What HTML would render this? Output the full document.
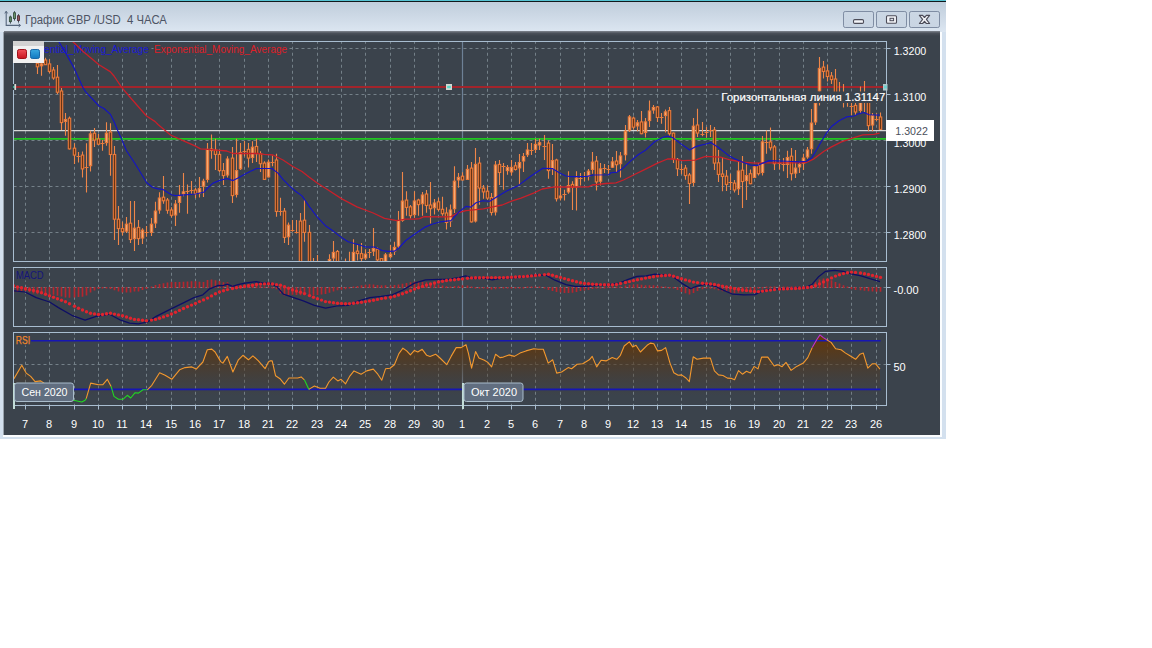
<!DOCTYPE html>
<html><head><meta charset="utf-8"><title>chart</title>
<style>
html,body{margin:0;padding:0;background:#fff;}
body{width:1152px;height:648px;overflow:hidden;position:relative;font-family:"Liberation Sans",sans-serif;}
#win{position:absolute;left:0;top:0;width:946px;height:438.6px;background:#d3e0ee;}
#topc{position:absolute;left:0;top:0;width:946px;height:1px;background:#55c3d3;}
#topk{position:absolute;left:0;top:1px;width:946px;height:1px;background:#10181c;}
#tbar{position:absolute;left:0;top:2px;width:946px;height:30px;background:linear-gradient(#c0cedc 0%,#cbd7e4 40%,#dce6f1 100%);}
#title{position:absolute;left:25.2px;top:13px;font-size:12px;color:#4d5464;white-space:pre;line-height:14px;transform-origin:0 0;transform:scaleX(0.944);}
#pan{position:absolute;left:4px;top:32px;width:936px;height:403px;background:#3b434c;}
#panshadow{position:absolute;left:4px;top:31px;width:936px;height:5px;background:linear-gradient(#80868f 0%,#4a5059 45%,#3b434c 100%);}
#wl{position:absolute;left:3px;top:32px;width:1px;height:404px;background:#9aa3ad;}
#wr{position:absolute;left:940px;top:32px;width:2px;height:405px;background:#fbfdff;}
#wb{position:absolute;left:3px;top:435px;width:939px;height:2px;background:#fbfdff;}
.btn{position:absolute;top:11px;height:14.7px;width:28.5px;border:1px solid #7f8da3;border-radius:2.2px;background:linear-gradient(#cbd7e4,#c9d5e3);box-sizing:content-box;}
svg{position:absolute;left:0;top:0;}
.ax{font-size:11px;fill:#fff;font-family:"Liberation Sans",sans-serif;}
.lg{font-size:11px;font-family:"Liberation Sans",sans-serif;}
.lb{font-size:11px;font-weight:normal;fill:#fff;stroke:#fff;stroke-width:0.2px;font-family:"Liberation Sans",sans-serif;}
.tg{font-size:11.5px;fill:#fff;font-family:"Liberation Sans",sans-serif;}
</style></head><body>
<div id="win"></div><div id="topc"></div><div id="topk"></div><div id="tbar"></div>
<div id="title">График GBP /USD  4 ЧАСА</div>
<div class="btn" style="left:843.2px"></div><div class="btn" style="left:876.2px"></div><div class="btn" style="left:909.2px"></div>
<div id="pan"></div><div id="panshadow"></div><div id="wl"></div><div id="wr"></div><div id="wb"></div>
<svg width="1152" height="648" viewBox="0 0 1152 648">
<line x1="25.5" x2="25.5" y1="41.75" y2="261.0" stroke="#748088" stroke-width="1" stroke-dasharray="3 3" stroke-dashoffset="1"/>
<line x1="25.5" x2="25.5" y1="267.75" y2="326.0" stroke="#748088" stroke-width="1" stroke-dasharray="3 3" stroke-dashoffset="1"/>
<line x1="25.5" x2="25.5" y1="332.75" y2="405.0" stroke="#748088" stroke-width="1" stroke-dasharray="3 3" stroke-dashoffset="1"/>
<line x1="49.5" x2="49.5" y1="41.75" y2="261.0" stroke="#748088" stroke-width="1" stroke-dasharray="3 3" stroke-dashoffset="1"/>
<line x1="49.5" x2="49.5" y1="267.75" y2="326.0" stroke="#748088" stroke-width="1" stroke-dasharray="3 3" stroke-dashoffset="1"/>
<line x1="49.5" x2="49.5" y1="332.75" y2="405.0" stroke="#748088" stroke-width="1" stroke-dasharray="3 3" stroke-dashoffset="1"/>
<line x1="74.5" x2="74.5" y1="41.75" y2="261.0" stroke="#748088" stroke-width="1" stroke-dasharray="3 3" stroke-dashoffset="1"/>
<line x1="74.5" x2="74.5" y1="267.75" y2="326.0" stroke="#748088" stroke-width="1" stroke-dasharray="3 3" stroke-dashoffset="1"/>
<line x1="74.5" x2="74.5" y1="332.75" y2="405.0" stroke="#748088" stroke-width="1" stroke-dasharray="3 3" stroke-dashoffset="1"/>
<line x1="98.5" x2="98.5" y1="41.75" y2="261.0" stroke="#748088" stroke-width="1" stroke-dasharray="3 3" stroke-dashoffset="1"/>
<line x1="98.5" x2="98.5" y1="267.75" y2="326.0" stroke="#748088" stroke-width="1" stroke-dasharray="3 3" stroke-dashoffset="1"/>
<line x1="98.5" x2="98.5" y1="332.75" y2="405.0" stroke="#748088" stroke-width="1" stroke-dasharray="3 3" stroke-dashoffset="1"/>
<line x1="122.5" x2="122.5" y1="41.75" y2="261.0" stroke="#748088" stroke-width="1" stroke-dasharray="3 3" stroke-dashoffset="1"/>
<line x1="122.5" x2="122.5" y1="267.75" y2="326.0" stroke="#748088" stroke-width="1" stroke-dasharray="3 3" stroke-dashoffset="1"/>
<line x1="122.5" x2="122.5" y1="332.75" y2="405.0" stroke="#748088" stroke-width="1" stroke-dasharray="3 3" stroke-dashoffset="1"/>
<line x1="146.5" x2="146.5" y1="41.75" y2="261.0" stroke="#748088" stroke-width="1" stroke-dasharray="3 3" stroke-dashoffset="1"/>
<line x1="146.5" x2="146.5" y1="267.75" y2="326.0" stroke="#748088" stroke-width="1" stroke-dasharray="3 3" stroke-dashoffset="1"/>
<line x1="146.5" x2="146.5" y1="332.75" y2="405.0" stroke="#748088" stroke-width="1" stroke-dasharray="3 3" stroke-dashoffset="1"/>
<line x1="171.5" x2="171.5" y1="41.75" y2="261.0" stroke="#748088" stroke-width="1" stroke-dasharray="3 3" stroke-dashoffset="1"/>
<line x1="171.5" x2="171.5" y1="267.75" y2="326.0" stroke="#748088" stroke-width="1" stroke-dasharray="3 3" stroke-dashoffset="1"/>
<line x1="171.5" x2="171.5" y1="332.75" y2="405.0" stroke="#748088" stroke-width="1" stroke-dasharray="3 3" stroke-dashoffset="1"/>
<line x1="195.5" x2="195.5" y1="41.75" y2="261.0" stroke="#748088" stroke-width="1" stroke-dasharray="3 3" stroke-dashoffset="1"/>
<line x1="195.5" x2="195.5" y1="267.75" y2="326.0" stroke="#748088" stroke-width="1" stroke-dasharray="3 3" stroke-dashoffset="1"/>
<line x1="195.5" x2="195.5" y1="332.75" y2="405.0" stroke="#748088" stroke-width="1" stroke-dasharray="3 3" stroke-dashoffset="1"/>
<line x1="219.5" x2="219.5" y1="41.75" y2="261.0" stroke="#748088" stroke-width="1" stroke-dasharray="3 3" stroke-dashoffset="1"/>
<line x1="219.5" x2="219.5" y1="267.75" y2="326.0" stroke="#748088" stroke-width="1" stroke-dasharray="3 3" stroke-dashoffset="1"/>
<line x1="219.5" x2="219.5" y1="332.75" y2="405.0" stroke="#748088" stroke-width="1" stroke-dasharray="3 3" stroke-dashoffset="1"/>
<line x1="244.5" x2="244.5" y1="41.75" y2="261.0" stroke="#748088" stroke-width="1" stroke-dasharray="3 3" stroke-dashoffset="1"/>
<line x1="244.5" x2="244.5" y1="267.75" y2="326.0" stroke="#748088" stroke-width="1" stroke-dasharray="3 3" stroke-dashoffset="1"/>
<line x1="244.5" x2="244.5" y1="332.75" y2="405.0" stroke="#748088" stroke-width="1" stroke-dasharray="3 3" stroke-dashoffset="1"/>
<line x1="268.5" x2="268.5" y1="41.75" y2="261.0" stroke="#748088" stroke-width="1" stroke-dasharray="3 3" stroke-dashoffset="1"/>
<line x1="268.5" x2="268.5" y1="267.75" y2="326.0" stroke="#748088" stroke-width="1" stroke-dasharray="3 3" stroke-dashoffset="1"/>
<line x1="268.5" x2="268.5" y1="332.75" y2="405.0" stroke="#748088" stroke-width="1" stroke-dasharray="3 3" stroke-dashoffset="1"/>
<line x1="292.5" x2="292.5" y1="41.75" y2="261.0" stroke="#748088" stroke-width="1" stroke-dasharray="3 3" stroke-dashoffset="1"/>
<line x1="292.5" x2="292.5" y1="267.75" y2="326.0" stroke="#748088" stroke-width="1" stroke-dasharray="3 3" stroke-dashoffset="1"/>
<line x1="292.5" x2="292.5" y1="332.75" y2="405.0" stroke="#748088" stroke-width="1" stroke-dasharray="3 3" stroke-dashoffset="1"/>
<line x1="317.5" x2="317.5" y1="41.75" y2="261.0" stroke="#748088" stroke-width="1" stroke-dasharray="3 3" stroke-dashoffset="1"/>
<line x1="317.5" x2="317.5" y1="267.75" y2="326.0" stroke="#748088" stroke-width="1" stroke-dasharray="3 3" stroke-dashoffset="1"/>
<line x1="317.5" x2="317.5" y1="332.75" y2="405.0" stroke="#748088" stroke-width="1" stroke-dasharray="3 3" stroke-dashoffset="1"/>
<line x1="341.5" x2="341.5" y1="41.75" y2="261.0" stroke="#748088" stroke-width="1" stroke-dasharray="3 3" stroke-dashoffset="1"/>
<line x1="341.5" x2="341.5" y1="267.75" y2="326.0" stroke="#748088" stroke-width="1" stroke-dasharray="3 3" stroke-dashoffset="1"/>
<line x1="341.5" x2="341.5" y1="332.75" y2="405.0" stroke="#748088" stroke-width="1" stroke-dasharray="3 3" stroke-dashoffset="1"/>
<line x1="365.5" x2="365.5" y1="41.75" y2="261.0" stroke="#748088" stroke-width="1" stroke-dasharray="3 3" stroke-dashoffset="1"/>
<line x1="365.5" x2="365.5" y1="267.75" y2="326.0" stroke="#748088" stroke-width="1" stroke-dasharray="3 3" stroke-dashoffset="1"/>
<line x1="365.5" x2="365.5" y1="332.75" y2="405.0" stroke="#748088" stroke-width="1" stroke-dasharray="3 3" stroke-dashoffset="1"/>
<line x1="390.5" x2="390.5" y1="41.75" y2="261.0" stroke="#748088" stroke-width="1" stroke-dasharray="3 3" stroke-dashoffset="1"/>
<line x1="390.5" x2="390.5" y1="267.75" y2="326.0" stroke="#748088" stroke-width="1" stroke-dasharray="3 3" stroke-dashoffset="1"/>
<line x1="390.5" x2="390.5" y1="332.75" y2="405.0" stroke="#748088" stroke-width="1" stroke-dasharray="3 3" stroke-dashoffset="1"/>
<line x1="414.5" x2="414.5" y1="41.75" y2="261.0" stroke="#748088" stroke-width="1" stroke-dasharray="3 3" stroke-dashoffset="1"/>
<line x1="414.5" x2="414.5" y1="267.75" y2="326.0" stroke="#748088" stroke-width="1" stroke-dasharray="3 3" stroke-dashoffset="1"/>
<line x1="414.5" x2="414.5" y1="332.75" y2="405.0" stroke="#748088" stroke-width="1" stroke-dasharray="3 3" stroke-dashoffset="1"/>
<line x1="438.5" x2="438.5" y1="41.75" y2="261.0" stroke="#748088" stroke-width="1" stroke-dasharray="3 3" stroke-dashoffset="1"/>
<line x1="438.5" x2="438.5" y1="267.75" y2="326.0" stroke="#748088" stroke-width="1" stroke-dasharray="3 3" stroke-dashoffset="1"/>
<line x1="438.5" x2="438.5" y1="332.75" y2="405.0" stroke="#748088" stroke-width="1" stroke-dasharray="3 3" stroke-dashoffset="1"/>
<line x1="462.5" x2="462.5" y1="41.75" y2="261.0" stroke="#748088" stroke-width="1" stroke-dasharray="3 3" stroke-dashoffset="1"/>
<line x1="462.5" x2="462.5" y1="267.75" y2="326.0" stroke="#748088" stroke-width="1" stroke-dasharray="3 3" stroke-dashoffset="1"/>
<line x1="462.5" x2="462.5" y1="332.75" y2="405.0" stroke="#748088" stroke-width="1" stroke-dasharray="3 3" stroke-dashoffset="1"/>
<line x1="487.5" x2="487.5" y1="41.75" y2="261.0" stroke="#748088" stroke-width="1" stroke-dasharray="3 3" stroke-dashoffset="1"/>
<line x1="487.5" x2="487.5" y1="267.75" y2="326.0" stroke="#748088" stroke-width="1" stroke-dasharray="3 3" stroke-dashoffset="1"/>
<line x1="487.5" x2="487.5" y1="332.75" y2="405.0" stroke="#748088" stroke-width="1" stroke-dasharray="3 3" stroke-dashoffset="1"/>
<line x1="511.5" x2="511.5" y1="41.75" y2="261.0" stroke="#748088" stroke-width="1" stroke-dasharray="3 3" stroke-dashoffset="1"/>
<line x1="511.5" x2="511.5" y1="267.75" y2="326.0" stroke="#748088" stroke-width="1" stroke-dasharray="3 3" stroke-dashoffset="1"/>
<line x1="511.5" x2="511.5" y1="332.75" y2="405.0" stroke="#748088" stroke-width="1" stroke-dasharray="3 3" stroke-dashoffset="1"/>
<line x1="535.5" x2="535.5" y1="41.75" y2="261.0" stroke="#748088" stroke-width="1" stroke-dasharray="3 3" stroke-dashoffset="1"/>
<line x1="535.5" x2="535.5" y1="267.75" y2="326.0" stroke="#748088" stroke-width="1" stroke-dasharray="3 3" stroke-dashoffset="1"/>
<line x1="535.5" x2="535.5" y1="332.75" y2="405.0" stroke="#748088" stroke-width="1" stroke-dasharray="3 3" stroke-dashoffset="1"/>
<line x1="560.5" x2="560.5" y1="41.75" y2="261.0" stroke="#748088" stroke-width="1" stroke-dasharray="3 3" stroke-dashoffset="1"/>
<line x1="560.5" x2="560.5" y1="267.75" y2="326.0" stroke="#748088" stroke-width="1" stroke-dasharray="3 3" stroke-dashoffset="1"/>
<line x1="560.5" x2="560.5" y1="332.75" y2="405.0" stroke="#748088" stroke-width="1" stroke-dasharray="3 3" stroke-dashoffset="1"/>
<line x1="584.5" x2="584.5" y1="41.75" y2="261.0" stroke="#748088" stroke-width="1" stroke-dasharray="3 3" stroke-dashoffset="1"/>
<line x1="584.5" x2="584.5" y1="267.75" y2="326.0" stroke="#748088" stroke-width="1" stroke-dasharray="3 3" stroke-dashoffset="1"/>
<line x1="584.5" x2="584.5" y1="332.75" y2="405.0" stroke="#748088" stroke-width="1" stroke-dasharray="3 3" stroke-dashoffset="1"/>
<line x1="608.5" x2="608.5" y1="41.75" y2="261.0" stroke="#748088" stroke-width="1" stroke-dasharray="3 3" stroke-dashoffset="1"/>
<line x1="608.5" x2="608.5" y1="267.75" y2="326.0" stroke="#748088" stroke-width="1" stroke-dasharray="3 3" stroke-dashoffset="1"/>
<line x1="608.5" x2="608.5" y1="332.75" y2="405.0" stroke="#748088" stroke-width="1" stroke-dasharray="3 3" stroke-dashoffset="1"/>
<line x1="633.5" x2="633.5" y1="41.75" y2="261.0" stroke="#748088" stroke-width="1" stroke-dasharray="3 3" stroke-dashoffset="1"/>
<line x1="633.5" x2="633.5" y1="267.75" y2="326.0" stroke="#748088" stroke-width="1" stroke-dasharray="3 3" stroke-dashoffset="1"/>
<line x1="633.5" x2="633.5" y1="332.75" y2="405.0" stroke="#748088" stroke-width="1" stroke-dasharray="3 3" stroke-dashoffset="1"/>
<line x1="657.5" x2="657.5" y1="41.75" y2="261.0" stroke="#748088" stroke-width="1" stroke-dasharray="3 3" stroke-dashoffset="1"/>
<line x1="657.5" x2="657.5" y1="267.75" y2="326.0" stroke="#748088" stroke-width="1" stroke-dasharray="3 3" stroke-dashoffset="1"/>
<line x1="657.5" x2="657.5" y1="332.75" y2="405.0" stroke="#748088" stroke-width="1" stroke-dasharray="3 3" stroke-dashoffset="1"/>
<line x1="681.5" x2="681.5" y1="41.75" y2="261.0" stroke="#748088" stroke-width="1" stroke-dasharray="3 3" stroke-dashoffset="1"/>
<line x1="681.5" x2="681.5" y1="267.75" y2="326.0" stroke="#748088" stroke-width="1" stroke-dasharray="3 3" stroke-dashoffset="1"/>
<line x1="681.5" x2="681.5" y1="332.75" y2="405.0" stroke="#748088" stroke-width="1" stroke-dasharray="3 3" stroke-dashoffset="1"/>
<line x1="706.5" x2="706.5" y1="41.75" y2="261.0" stroke="#748088" stroke-width="1" stroke-dasharray="3 3" stroke-dashoffset="1"/>
<line x1="706.5" x2="706.5" y1="267.75" y2="326.0" stroke="#748088" stroke-width="1" stroke-dasharray="3 3" stroke-dashoffset="1"/>
<line x1="706.5" x2="706.5" y1="332.75" y2="405.0" stroke="#748088" stroke-width="1" stroke-dasharray="3 3" stroke-dashoffset="1"/>
<line x1="730.5" x2="730.5" y1="41.75" y2="261.0" stroke="#748088" stroke-width="1" stroke-dasharray="3 3" stroke-dashoffset="1"/>
<line x1="730.5" x2="730.5" y1="267.75" y2="326.0" stroke="#748088" stroke-width="1" stroke-dasharray="3 3" stroke-dashoffset="1"/>
<line x1="730.5" x2="730.5" y1="332.75" y2="405.0" stroke="#748088" stroke-width="1" stroke-dasharray="3 3" stroke-dashoffset="1"/>
<line x1="754.5" x2="754.5" y1="41.75" y2="261.0" stroke="#748088" stroke-width="1" stroke-dasharray="3 3" stroke-dashoffset="1"/>
<line x1="754.5" x2="754.5" y1="267.75" y2="326.0" stroke="#748088" stroke-width="1" stroke-dasharray="3 3" stroke-dashoffset="1"/>
<line x1="754.5" x2="754.5" y1="332.75" y2="405.0" stroke="#748088" stroke-width="1" stroke-dasharray="3 3" stroke-dashoffset="1"/>
<line x1="779.5" x2="779.5" y1="41.75" y2="261.0" stroke="#748088" stroke-width="1" stroke-dasharray="3 3" stroke-dashoffset="1"/>
<line x1="779.5" x2="779.5" y1="267.75" y2="326.0" stroke="#748088" stroke-width="1" stroke-dasharray="3 3" stroke-dashoffset="1"/>
<line x1="779.5" x2="779.5" y1="332.75" y2="405.0" stroke="#748088" stroke-width="1" stroke-dasharray="3 3" stroke-dashoffset="1"/>
<line x1="803.5" x2="803.5" y1="41.75" y2="261.0" stroke="#748088" stroke-width="1" stroke-dasharray="3 3" stroke-dashoffset="1"/>
<line x1="803.5" x2="803.5" y1="267.75" y2="326.0" stroke="#748088" stroke-width="1" stroke-dasharray="3 3" stroke-dashoffset="1"/>
<line x1="803.5" x2="803.5" y1="332.75" y2="405.0" stroke="#748088" stroke-width="1" stroke-dasharray="3 3" stroke-dashoffset="1"/>
<line x1="827.5" x2="827.5" y1="41.75" y2="261.0" stroke="#748088" stroke-width="1" stroke-dasharray="3 3" stroke-dashoffset="1"/>
<line x1="827.5" x2="827.5" y1="267.75" y2="326.0" stroke="#748088" stroke-width="1" stroke-dasharray="3 3" stroke-dashoffset="1"/>
<line x1="827.5" x2="827.5" y1="332.75" y2="405.0" stroke="#748088" stroke-width="1" stroke-dasharray="3 3" stroke-dashoffset="1"/>
<line x1="851.5" x2="851.5" y1="41.75" y2="261.0" stroke="#748088" stroke-width="1" stroke-dasharray="3 3" stroke-dashoffset="1"/>
<line x1="851.5" x2="851.5" y1="267.75" y2="326.0" stroke="#748088" stroke-width="1" stroke-dasharray="3 3" stroke-dashoffset="1"/>
<line x1="851.5" x2="851.5" y1="332.75" y2="405.0" stroke="#748088" stroke-width="1" stroke-dasharray="3 3" stroke-dashoffset="1"/>
<line x1="876.5" x2="876.5" y1="41.75" y2="261.0" stroke="#748088" stroke-width="1" stroke-dasharray="3 3" stroke-dashoffset="1"/>
<line x1="876.5" x2="876.5" y1="267.75" y2="326.0" stroke="#748088" stroke-width="1" stroke-dasharray="3 3" stroke-dashoffset="1"/>
<line x1="876.5" x2="876.5" y1="332.75" y2="405.0" stroke="#748088" stroke-width="1" stroke-dasharray="3 3" stroke-dashoffset="1"/>
<line x1="13.5" x2="886.5" y1="48.5" y2="48.5" stroke="#748088" stroke-width="1" stroke-dasharray="3 3"/>
<line x1="886.5" x2="890.5" y1="48.5" y2="48.5" stroke="#a8bdd0" stroke-width="1"/>
<line x1="13.5" x2="886.5" y1="94.5" y2="94.5" stroke="#748088" stroke-width="1" stroke-dasharray="3 3"/>
<line x1="886.5" x2="890.5" y1="94.5" y2="94.5" stroke="#a8bdd0" stroke-width="1"/>
<line x1="13.5" x2="886.5" y1="140.5" y2="140.5" stroke="#748088" stroke-width="1" stroke-dasharray="3 3"/>
<line x1="886.5" x2="890.5" y1="140.5" y2="140.5" stroke="#a8bdd0" stroke-width="1"/>
<line x1="13.5" x2="886.5" y1="186.5" y2="186.5" stroke="#748088" stroke-width="1" stroke-dasharray="3 3"/>
<line x1="886.5" x2="890.5" y1="186.5" y2="186.5" stroke="#a8bdd0" stroke-width="1"/>
<line x1="13.5" x2="886.5" y1="232.5" y2="232.5" stroke="#748088" stroke-width="1" stroke-dasharray="3 3"/>
<line x1="886.5" x2="890.5" y1="232.5" y2="232.5" stroke="#a8bdd0" stroke-width="1"/>
<line x1="13.5" x2="886.5" y1="287.5" y2="287.5" stroke="#748088" stroke-width="1" stroke-dasharray="3 3"/>
<line x1="886.5" x2="890.5" y1="287.5" y2="287.5" stroke="#a8bdd0" stroke-width="1"/>
<line x1="13.5" x2="886.5" y1="364.5" y2="364.5" stroke="#748088" stroke-width="1" stroke-dasharray="3 3"/>
<line x1="886.5" x2="890.5" y1="364.5" y2="364.5" stroke="#a8bdd0" stroke-width="1"/>
<line x1="462.5" x2="462.5" y1="42.0" y2="261.0" stroke="#6e8196" stroke-width="1.2"/>
<line x1="462.5" x2="462.5" y1="268.0" y2="326.0" stroke="#6e8196" stroke-width="1.2"/>
<line x1="462.5" x2="462.5" y1="333.0" y2="405.0" stroke="#6e8196" stroke-width="1.2"/>
<rect x="15" y="42" width="134.5" height="13.5" fill="#3b434c"/>
<rect x="153.5" y="42" width="134.5" height="13.5" fill="#3b434c"/>
<text x="15.6" y="53.3" class="lg" fill="#1a1ad6" textLength="133.2" lengthAdjust="spacingAndGlyphs">Exponential_Moving_Average</text>
<text x="154" y="53.3" class="lg" fill="#de2028" textLength="133.2" lengthAdjust="spacingAndGlyphs">Exponential_Moving_Average</text>
<defs><clipPath id="cm"><rect x="14.0" y="42.0" width="872.0" height="219.0"/></clipPath><clipPath id="cc"><rect x="14.0" y="268.0" width="872.0" height="58.0"/></clipPath><clipPath id="cr"><rect x="14.0" y="333.0" width="872.0" height="72.0"/></clipPath><linearGradient id="rg" gradientUnits="userSpaceOnUse" x1="0" y1="336" x2="0" y2="396"><stop offset="0" stop-color="#6a3600" stop-opacity="0.92"/><stop offset="0.45" stop-color="#55381a" stop-opacity="0.62"/><stop offset="1" stop-color="#4a3a2c" stop-opacity="0"/></linearGradient></defs>
<g clip-path="url(#cm)">
<line x1="13.5" x2="886.5" y1="87.05" y2="87.05" stroke="#a2242b" stroke-width="2.1"/>
<line x1="13.5" x2="886.5" y1="130.5" y2="130.5" stroke="#d6d6d6" stroke-width="1.25"/>
<line x1="13.5" x2="886.5" y1="138.8" y2="138.8" stroke="#20c620" stroke-width="1.7"/>
<path d="M37.5 62.9V73.9M41.5 63.0V75.8M45.5 57.8V65.0M49.5 59.2V73.3M53.5 66.9V79.7M57.5 65.0V94.1M61.5 87.9V130.1M65.5 112.9V135.7M69.5 116.4V149.5M74.5 143.2V163.9M78.5 152.0V162.6M82.5 151.4V177.6M86.5 143.2V192.4M90.5 130.7V171.4M94.5 128.0V147.0M98.5 133.9V145.1M102.5 140.1V150.7M106.5 122.2V145.7M110.5 123.2V175.7M114.5 146.0V239.9M118.5 206.1V244.9M122.5 221.7V235.5M126.5 217.0V233.0M130.5 201.1V243.0M134.5 201.1V251.1M138.5 219.9V244.9M142.5 228.2V244.0M146.5 226.1V236.7M151.5 218.0V236.1M155.5 201.7V228.0M159.5 192.2V213.7M163.5 176.0V203.7M167.5 198.0V213.7M171.5 207.2V217.4M175.5 200.0V226.1M179.5 185.1V212.8M183.5 173.1V196.2M187.5 184.4V213.7M191.5 181.0V193.7M195.5 188.1V198.1M199.5 176.9V197.5M203.5 178.7V196.9M207.5 143.1V182.5M211.5 134.5V158.7M215.5 138.7V170.0M219.5 150.0V172.5M223.5 163.1V185.0M227.5 156.2V177.5M232.5 146.9V203.1M236.5 138.7V197.5M240.5 143.1V170.0M244.5 141.0V156.2M248.5 143.1V167.5M252.5 141.2V163.1M256.5 138.7V161.9M260.5 151.2V171.9M264.5 161.2V180.0M268.5 159.4V177.5M272.5 155.6V166.2M276.5 153.7V216.7M280.5 197.7V215.7M284.5 208.0V243.0M288.5 222.4V244.9M292.5 219.9V231.7M296.5 219.9V233.6M300.5 213.0V266.0M304.5 199.2V241.7M309.5 224.9V272.0M313.5 258.0V276.0M317.5 254.9V280.0M321.5 264.0V282.0M325.5 263.0V280.0M329.5 254.2V270.0M333.5 241.1V261.5M337.5 249.9V270.0M341.5 262.5V276.0M345.5 258.6V274.0M349.5 251.7V272.0M353.5 239.2V266.0M357.5 244.9V260.5M361.5 243.0V261.0M365.5 249.2V259.9M369.5 249.0V258.0M373.5 228.0V256.1M377.5 247.4V262.0M381.5 258.0V265.0M385.5 253.0V264.0M390.5 244.9V258.0M394.5 241.7V254.9M398.5 211.1V248.0M402.5 171.9V221.7M406.5 191.2V215.8M410.5 205.0V218.5M414.5 191.2V217.7M418.5 198.7V215.8M422.5 192.1V215.8M426.5 190.0V212.7M430.5 181.9V223.6M434.5 199.0V214.6M438.5 197.7V211.2M442.5 196.8V215.7M446.5 207.2V229.4M450.5 204.4V226.9M454.5 166.2V213.1M458.5 173.1V187.8M462.5 172.2V180.6M467.5 165.0V180.0M471.5 161.9V222.5M475.5 148.1V222.5M479.5 156.9V204.7M483.5 185.0V198.7M487.5 185.6V199.7M491.5 193.1V215.6M495.5 160.9V215.6M499.5 160.0V185.0M503.5 163.1V189.7M507.5 165.0V174.7M511.5 160.0V175.6M515.5 162.0V170.6M519.5 154.0V185.0M523.5 153.1V171.9M527.5 143.1V156.9M531.5 143.1V155.0M535.5 138.7V153.1M539.5 138.7V150.0M544.5 135.0V160.0M548.5 140.6V178.7M552.5 144.0V175.0M556.5 158.7V201.6M560.5 185.3V200.6M564.5 189.7V200.6M568.5 171.2V193.7M572.5 181.2V210.0M576.5 171.2V210.6M580.5 173.1V185.6M584.5 171.9V181.2M588.5 169.0V180.6M592.5 151.9V173.7M596.5 156.1V190.6M600.5 163.1V185.6M604.5 164.0V173.1M608.5 165.0V173.7M612.5 156.9V168.1M616.5 151.0V171.9M620.5 151.9V177.5M625.5 125.0V160.6M629.5 115.0V131.9M633.5 116.5V129.7M637.5 120.0V131.2M641.5 110.9V134.2M645.5 118.1V137.5M649.5 100.6V126.9M653.5 105.0V113.7M657.5 106.0V121.9M661.5 113.1V123.7M665.5 109.4V132.5M669.5 106.9V135.6M673.5 132.5V163.1M677.5 158.1V175.9M681.5 163.7V174.2M685.5 165.0V179.7M689.5 173.1V204.0M693.5 118.1V186.2M697.5 108.7V136.9M702.5 121.9V136.2M706.5 126.9V137.5M710.5 125.0V136.9M714.5 126.9V170.0M718.5 150.0V181.9M722.5 156.9V191.2M726.5 170.0V191.0M730.5 173.7V190.0M734.5 180.0V192.5M738.5 161.9V195.0M742.5 156.1V208.1M746.5 164.2V200.0M750.5 169.4V184.2M754.5 165.8V178.1M758.5 163.1V175.6M762.5 136.0V175.6M766.5 130.6V153.7M770.5 127.5V150.6M774.5 145.0V170.0M779.5 158.7V169.4M783.5 158.1V171.2M787.5 150.8V178.1M791.5 148.1V180.6M795.5 150.0V178.1M799.5 161.5V173.1M803.5 153.7V170.0M807.5 146.9V158.7M811.5 109.0V153.7M815.5 98.0V125.0M819.5 57.1V105.6M823.5 60.9V78.4M827.5 64.6V81.5M831.5 72.1V84.0M835.5 69.0V102.0M839.5 82.1V102.0M843.5 84.0V107.6M847.5 92.0V106.7M851.5 94.0V115.0M855.5 98.0V115.1M860.5 86.5V113.2M864.5 80.9V112.0M868.5 96.0V131.2M872.5 113.1V131.2M876.5 113.2V121.0M880.5 112.5V130.0" stroke="#ee8648" stroke-width="1.1" fill="none"/>
<rect x="36.3" y="63.3" width="2.4" height="3.5" fill="#683414" stroke="#ea7a3a" stroke-width="1.1"/>
<rect x="40.3" y="63.9" width="2.4" height="1.9" fill="#f6aa72" stroke="#ea7a3a" stroke-width="1.1"/>
<rect x="44.3" y="60.0" width="2.4" height="4.7" fill="#683414" stroke="#ea7a3a" stroke-width="1.1"/>
<rect x="48.3" y="63.9" width="2.4" height="7.5" fill="#683414" stroke="#ea7a3a" stroke-width="1.1"/>
<rect x="52.3" y="70.0" width="2.4" height="8.0" fill="#683414" stroke="#ea7a3a" stroke-width="1.1"/>
<rect x="56.3" y="77.2" width="2.4" height="15.0" fill="#683414" stroke="#ea7a3a" stroke-width="1.1"/>
<rect x="60.3" y="91.0" width="2.4" height="31.6" fill="#683414" stroke="#ea7a3a" stroke-width="1.1"/>
<rect x="64.3" y="119.5" width="2.4" height="1.9" fill="#f6aa72" stroke="#ea7a3a" stroke-width="1.1"/>
<rect x="68.3" y="118.2" width="2.4" height="30.7" fill="#683414" stroke="#ea7a3a" stroke-width="1.1"/>
<rect x="73.3" y="148.2" width="2.4" height="6.9" fill="#683414" stroke="#ea7a3a" stroke-width="1.1"/>
<path d="M76.5 156.5H80.5" stroke="#ea7a3a" stroke-width="1" fill="none"/>
<rect x="81.3" y="155.1" width="2.4" height="13.8" fill="#683414" stroke="#ea7a3a" stroke-width="1.1"/>
<path d="M84.5 167.5H88.5" stroke="#ea7a3a" stroke-width="1" fill="none"/>
<rect x="89.3" y="133.9" width="2.4" height="31.8" fill="#f6aa72" stroke="#ea7a3a" stroke-width="1.1"/>
<rect x="93.3" y="133.2" width="2.4" height="6.9" fill="#683414" stroke="#ea7a3a" stroke-width="1.1"/>
<rect x="97.3" y="138.9" width="2.4" height="5.3" fill="#683414" stroke="#ea7a3a" stroke-width="1.1"/>
<path d="M100.5 143.5H104.5" stroke="#ea7a3a" stroke-width="1" fill="none"/>
<rect x="105.3" y="133.2" width="2.4" height="9.4" fill="#f6aa72" stroke="#ea7a3a" stroke-width="1.1"/>
<rect x="109.3" y="132.0" width="2.4" height="22.5" fill="#683414" stroke="#ea7a3a" stroke-width="1.1"/>
<rect x="113.3" y="154.5" width="2.4" height="64.7" fill="#683414" stroke="#ea7a3a" stroke-width="1.1"/>
<rect x="117.3" y="219.2" width="2.4" height="9.4" fill="#683414" stroke="#ea7a3a" stroke-width="1.1"/>
<rect x="121.3" y="228.6" width="2.4" height="3.1" fill="#683414" stroke="#ea7a3a" stroke-width="1.1"/>
<rect x="125.3" y="224.2" width="2.4" height="6.9" fill="#f6aa72" stroke="#ea7a3a" stroke-width="1.1"/>
<rect x="129.3" y="223.2" width="2.4" height="16.3" fill="#683414" stroke="#ea7a3a" stroke-width="1.1"/>
<rect x="133.3" y="228.2" width="2.4" height="10.4" fill="#f6aa72" stroke="#ea7a3a" stroke-width="1.1"/>
<rect x="137.3" y="227.4" width="2.4" height="11.2" fill="#683414" stroke="#ea7a3a" stroke-width="1.1"/>
<rect x="141.3" y="230.2" width="2.4" height="7.8" fill="#f6aa72" stroke="#ea7a3a" stroke-width="1.1"/>
<path d="M144.5 232.5H148.5" stroke="#ea7a3a" stroke-width="1" fill="none"/>
<rect x="150.3" y="224.2" width="2.4" height="8.2" fill="#f6aa72" stroke="#ea7a3a" stroke-width="1.1"/>
<rect x="154.3" y="211.1" width="2.4" height="11.9" fill="#f6aa72" stroke="#ea7a3a" stroke-width="1.1"/>
<rect x="158.3" y="198.0" width="2.4" height="12.0" fill="#f6aa72" stroke="#ea7a3a" stroke-width="1.1"/>
<rect x="162.3" y="197.2" width="2.4" height="3.6" fill="#683414" stroke="#ea7a3a" stroke-width="1.1"/>
<rect x="166.3" y="200.0" width="2.4" height="10.3" fill="#683414" stroke="#ea7a3a" stroke-width="1.1"/>
<rect x="170.3" y="210.0" width="2.4" height="5.3" fill="#683414" stroke="#ea7a3a" stroke-width="1.1"/>
<rect x="174.3" y="204.0" width="2.4" height="11.0" fill="#f6aa72" stroke="#ea7a3a" stroke-width="1.1"/>
<rect x="178.3" y="196.2" width="2.4" height="6.2" fill="#f6aa72" stroke="#ea7a3a" stroke-width="1.1"/>
<rect x="182.3" y="191.9" width="2.4" height="1.8" fill="#f6aa72" stroke="#ea7a3a" stroke-width="1.1"/>
<path d="M185.5 191.5H189.5" stroke="#ea7a3a" stroke-width="1" fill="none"/>
<path d="M189.5 190.5H193.5" stroke="#ea7a3a" stroke-width="1" fill="none"/>
<rect x="194.3" y="190.0" width="2.4" height="3.7" fill="#683414" stroke="#ea7a3a" stroke-width="1.1"/>
<rect x="198.3" y="188.7" width="2.4" height="4.4" fill="#f6aa72" stroke="#ea7a3a" stroke-width="1.1"/>
<rect x="202.3" y="181.2" width="2.4" height="5.0" fill="#f6aa72" stroke="#ea7a3a" stroke-width="1.1"/>
<rect x="206.3" y="149.4" width="2.4" height="30.0" fill="#f6aa72" stroke="#ea7a3a" stroke-width="1.1"/>
<rect x="210.3" y="149.0" width="2.4" height="1.6" fill="#683414" stroke="#ea7a3a" stroke-width="1.1"/>
<rect x="214.3" y="150.0" width="2.4" height="4.4" fill="#683414" stroke="#ea7a3a" stroke-width="1.1"/>
<rect x="218.3" y="154.4" width="2.4" height="16.2" fill="#683414" stroke="#ea7a3a" stroke-width="1.1"/>
<rect x="222.3" y="170.6" width="2.4" height="5.0" fill="#683414" stroke="#ea7a3a" stroke-width="1.1"/>
<rect x="226.3" y="159.0" width="2.4" height="16.0" fill="#f6aa72" stroke="#ea7a3a" stroke-width="1.1"/>
<rect x="231.3" y="158.1" width="2.4" height="37.5" fill="#683414" stroke="#ea7a3a" stroke-width="1.1"/>
<rect x="235.3" y="170.6" width="2.4" height="23.8" fill="#f6aa72" stroke="#ea7a3a" stroke-width="1.1"/>
<rect x="239.3" y="152.5" width="2.4" height="16.2" fill="#f6aa72" stroke="#ea7a3a" stroke-width="1.1"/>
<path d="M242.5 151.5H246.5" stroke="#ea7a3a" stroke-width="1" fill="none"/>
<rect x="247.3" y="149.4" width="2.4" height="8.7" fill="#683414" stroke="#ea7a3a" stroke-width="1.1"/>
<rect x="251.3" y="147.2" width="2.4" height="10.3" fill="#f6aa72" stroke="#ea7a3a" stroke-width="1.1"/>
<rect x="255.3" y="146.5" width="2.4" height="7.2" fill="#683414" stroke="#ea7a3a" stroke-width="1.1"/>
<rect x="259.3" y="153.7" width="2.4" height="10.0" fill="#683414" stroke="#ea7a3a" stroke-width="1.1"/>
<rect x="263.3" y="163.1" width="2.4" height="16.3" fill="#683414" stroke="#ea7a3a" stroke-width="1.1"/>
<rect x="267.3" y="162.2" width="2.4" height="14.7" fill="#f6aa72" stroke="#ea7a3a" stroke-width="1.1"/>
<path d="M270.5 162.5H274.5" stroke="#ea7a3a" stroke-width="1" fill="none"/>
<rect x="275.3" y="160.0" width="2.4" height="51.4" fill="#683414" stroke="#ea7a3a" stroke-width="1.1"/>
<path d="M278.5 211.5H282.5" stroke="#ea7a3a" stroke-width="1" fill="none"/>
<rect x="283.3" y="211.1" width="2.4" height="26.3" fill="#683414" stroke="#ea7a3a" stroke-width="1.1"/>
<rect x="287.3" y="225.2" width="2.4" height="11.5" fill="#f6aa72" stroke="#ea7a3a" stroke-width="1.1"/>
<path d="M290.5 230.5H294.5" stroke="#ea7a3a" stroke-width="1" fill="none"/>
<path d="M294.5 232.5H298.5" stroke="#ea7a3a" stroke-width="1" fill="none"/>
<rect x="299.3" y="221.1" width="2.4" height="40.9" fill="#683414" stroke="#ea7a3a" stroke-width="1.1"/>
<rect x="303.3" y="220.2" width="2.4" height="12.2" fill="#683414" stroke="#ea7a3a" stroke-width="1.1"/>
<rect x="308.3" y="232.4" width="2.4" height="35.6" fill="#683414" stroke="#ea7a3a" stroke-width="1.1"/>
<rect x="312.3" y="266.0" width="2.4" height="6.0" fill="#683414" stroke="#ea7a3a" stroke-width="1.1"/>
<rect x="316.3" y="268.0" width="2.4" height="6.0" fill="#683414" stroke="#ea7a3a" stroke-width="1.1"/>
<rect x="320.3" y="270.0" width="2.4" height="8.0" fill="#683414" stroke="#ea7a3a" stroke-width="1.1"/>
<rect x="324.3" y="268.0" width="2.4" height="6.0" fill="#f6aa72" stroke="#ea7a3a" stroke-width="1.1"/>
<rect x="328.3" y="259.5" width="2.4" height="8.5" fill="#f6aa72" stroke="#ea7a3a" stroke-width="1.1"/>
<rect x="332.3" y="252.4" width="2.4" height="5.6" fill="#f6aa72" stroke="#ea7a3a" stroke-width="1.1"/>
<rect x="336.3" y="251.5" width="2.4" height="14.5" fill="#683414" stroke="#ea7a3a" stroke-width="1.1"/>
<rect x="340.3" y="266.0" width="2.4" height="6.0" fill="#683414" stroke="#ea7a3a" stroke-width="1.1"/>
<rect x="344.3" y="264.0" width="2.4" height="8.0" fill="#f6aa72" stroke="#ea7a3a" stroke-width="1.1"/>
<rect x="348.3" y="262.0" width="2.4" height="6.0" fill="#f6aa72" stroke="#ea7a3a" stroke-width="1.1"/>
<rect x="352.3" y="252.4" width="2.4" height="10.6" fill="#f6aa72" stroke="#ea7a3a" stroke-width="1.1"/>
<rect x="356.3" y="251.1" width="2.4" height="2.5" fill="#683414" stroke="#ea7a3a" stroke-width="1.1"/>
<rect x="360.3" y="253.6" width="2.4" height="5.0" fill="#683414" stroke="#ea7a3a" stroke-width="1.1"/>
<rect x="364.3" y="254.2" width="2.4" height="3.8" fill="#f6aa72" stroke="#ea7a3a" stroke-width="1.1"/>
<path d="M367.5 252.5H371.5" stroke="#ea7a3a" stroke-width="1" fill="none"/>
<rect x="372.3" y="248.6" width="2.4" height="2.5" fill="#f6aa72" stroke="#ea7a3a" stroke-width="1.1"/>
<rect x="376.3" y="249.2" width="2.4" height="10.7" fill="#683414" stroke="#ea7a3a" stroke-width="1.1"/>
<rect x="380.3" y="258.6" width="2.4" height="4.4" fill="#683414" stroke="#ea7a3a" stroke-width="1.1"/>
<rect x="384.3" y="254.9" width="2.4" height="8.1" fill="#f6aa72" stroke="#ea7a3a" stroke-width="1.1"/>
<rect x="389.3" y="254.2" width="2.4" height="2.5" fill="#f6aa72" stroke="#ea7a3a" stroke-width="1.1"/>
<rect x="393.3" y="247.4" width="2.4" height="3.7" fill="#f6aa72" stroke="#ea7a3a" stroke-width="1.1"/>
<rect x="397.3" y="220.5" width="2.4" height="25.6" fill="#f6aa72" stroke="#ea7a3a" stroke-width="1.1"/>
<rect x="401.3" y="201.1" width="2.4" height="19.2" fill="#f6aa72" stroke="#ea7a3a" stroke-width="1.1"/>
<rect x="405.3" y="200.1" width="2.4" height="7.3" fill="#683414" stroke="#ea7a3a" stroke-width="1.1"/>
<rect x="409.3" y="206.8" width="2.4" height="8.9" fill="#683414" stroke="#ea7a3a" stroke-width="1.1"/>
<rect x="413.3" y="201.0" width="2.4" height="13.6" fill="#f6aa72" stroke="#ea7a3a" stroke-width="1.1"/>
<rect x="417.3" y="200.0" width="2.4" height="4.6" fill="#683414" stroke="#ea7a3a" stroke-width="1.1"/>
<rect x="421.3" y="195.0" width="2.4" height="8.7" fill="#f6aa72" stroke="#ea7a3a" stroke-width="1.1"/>
<rect x="425.3" y="194.0" width="2.4" height="11.5" fill="#683414" stroke="#ea7a3a" stroke-width="1.1"/>
<rect x="429.3" y="205.0" width="2.4" height="3.7" fill="#683414" stroke="#ea7a3a" stroke-width="1.1"/>
<rect x="433.3" y="203.0" width="2.4" height="4.7" fill="#f6aa72" stroke="#ea7a3a" stroke-width="1.1"/>
<rect x="437.3" y="201.8" width="2.4" height="7.6" fill="#683414" stroke="#ea7a3a" stroke-width="1.1"/>
<rect x="441.3" y="209.3" width="2.4" height="4.4" fill="#683414" stroke="#ea7a3a" stroke-width="1.1"/>
<rect x="445.3" y="213.0" width="2.4" height="9.5" fill="#683414" stroke="#ea7a3a" stroke-width="1.1"/>
<rect x="449.3" y="210.0" width="2.4" height="11.0" fill="#f6aa72" stroke="#ea7a3a" stroke-width="1.1"/>
<rect x="453.3" y="181.2" width="2.4" height="27.5" fill="#f6aa72" stroke="#ea7a3a" stroke-width="1.1"/>
<rect x="457.3" y="177.4" width="2.4" height="2.5" fill="#f6aa72" stroke="#ea7a3a" stroke-width="1.1"/>
<rect x="461.3" y="176.2" width="2.4" height="3.8" fill="#683414" stroke="#ea7a3a" stroke-width="1.1"/>
<rect x="466.3" y="169.4" width="2.4" height="10.0" fill="#f6aa72" stroke="#ea7a3a" stroke-width="1.1"/>
<rect x="470.3" y="168.1" width="2.4" height="53.8" fill="#683414" stroke="#ea7a3a" stroke-width="1.1"/>
<rect x="474.3" y="164.4" width="2.4" height="56.6" fill="#f6aa72" stroke="#ea7a3a" stroke-width="1.1"/>
<rect x="478.3" y="163.1" width="2.4" height="25.0" fill="#683414" stroke="#ea7a3a" stroke-width="1.1"/>
<rect x="482.3" y="188.1" width="2.4" height="3.8" fill="#683414" stroke="#ea7a3a" stroke-width="1.1"/>
<rect x="486.3" y="191.2" width="2.4" height="6.9" fill="#683414" stroke="#ea7a3a" stroke-width="1.1"/>
<rect x="490.3" y="197.5" width="2.4" height="15.0" fill="#683414" stroke="#ea7a3a" stroke-width="1.1"/>
<rect x="494.3" y="165.0" width="2.4" height="46.9" fill="#f6aa72" stroke="#ea7a3a" stroke-width="1.1"/>
<rect x="498.3" y="164.4" width="2.4" height="8.1" fill="#683414" stroke="#ea7a3a" stroke-width="1.1"/>
<path d="M501.5 166.5H505.5" stroke="#ea7a3a" stroke-width="1" fill="none"/>
<rect x="506.3" y="167.5" width="2.4" height="3.1" fill="#f6aa72" stroke="#ea7a3a" stroke-width="1.1"/>
<rect x="510.3" y="167.4" width="2.4" height="4.5" fill="#f6aa72" stroke="#ea7a3a" stroke-width="1.1"/>
<rect x="514.3" y="165.8" width="2.4" height="3.7" fill="#683414" stroke="#ea7a3a" stroke-width="1.1"/>
<rect x="518.3" y="162.5" width="2.4" height="5.4" fill="#f6aa72" stroke="#ea7a3a" stroke-width="1.1"/>
<rect x="522.3" y="156.5" width="2.4" height="4.5" fill="#f6aa72" stroke="#ea7a3a" stroke-width="1.1"/>
<rect x="526.3" y="150.0" width="2.4" height="4.7" fill="#f6aa72" stroke="#ea7a3a" stroke-width="1.1"/>
<path d="M529.5 150.5H533.5" stroke="#ea7a3a" stroke-width="1" fill="none"/>
<rect x="534.3" y="144.4" width="2.4" height="5.0" fill="#f6aa72" stroke="#ea7a3a" stroke-width="1.1"/>
<rect x="538.3" y="142.7" width="2.4" height="2.3" fill="#f6aa72" stroke="#ea7a3a" stroke-width="1.1"/>
<path d="M542.5 146.5H546.5" stroke="#ea7a3a" stroke-width="1" fill="none"/>
<rect x="547.3" y="143.1" width="2.4" height="27.5" fill="#683414" stroke="#ea7a3a" stroke-width="1.1"/>
<rect x="551.3" y="160.6" width="2.4" height="8.1" fill="#f6aa72" stroke="#ea7a3a" stroke-width="1.1"/>
<rect x="555.3" y="160.0" width="2.4" height="38.7" fill="#683414" stroke="#ea7a3a" stroke-width="1.1"/>
<rect x="559.3" y="196.0" width="2.4" height="1.8" fill="#f6aa72" stroke="#ea7a3a" stroke-width="1.1"/>
<path d="M562.5 194.5H566.5" stroke="#ea7a3a" stroke-width="1" fill="none"/>
<rect x="567.3" y="185.6" width="2.4" height="6.3" fill="#f6aa72" stroke="#ea7a3a" stroke-width="1.1"/>
<rect x="571.3" y="184.4" width="2.4" height="3.0" fill="#683414" stroke="#ea7a3a" stroke-width="1.1"/>
<rect x="575.3" y="178.1" width="2.4" height="8.8" fill="#f6aa72" stroke="#ea7a3a" stroke-width="1.1"/>
<path d="M578.5 178.5H582.5" stroke="#ea7a3a" stroke-width="1" fill="none"/>
<path d="M582.5 176.5H586.5" stroke="#ea7a3a" stroke-width="1" fill="none"/>
<rect x="587.3" y="171.2" width="2.4" height="5.0" fill="#f6aa72" stroke="#ea7a3a" stroke-width="1.1"/>
<rect x="591.3" y="162.1" width="2.4" height="7.3" fill="#f6aa72" stroke="#ea7a3a" stroke-width="1.1"/>
<rect x="595.3" y="161.1" width="2.4" height="20.8" fill="#683414" stroke="#ea7a3a" stroke-width="1.1"/>
<rect x="599.3" y="168.9" width="2.4" height="12.3" fill="#f6aa72" stroke="#ea7a3a" stroke-width="1.1"/>
<path d="M602.5 168.5H606.5" stroke="#ea7a3a" stroke-width="1" fill="none"/>
<path d="M606.5 169.5H610.5" stroke="#ea7a3a" stroke-width="1" fill="none"/>
<rect x="611.3" y="161.9" width="2.4" height="5.3" fill="#f6aa72" stroke="#ea7a3a" stroke-width="1.1"/>
<rect x="615.3" y="161.0" width="2.4" height="3.7" fill="#683414" stroke="#ea7a3a" stroke-width="1.1"/>
<rect x="619.3" y="156.0" width="2.4" height="7.7" fill="#f6aa72" stroke="#ea7a3a" stroke-width="1.1"/>
<rect x="624.3" y="131.2" width="2.4" height="23.5" fill="#f6aa72" stroke="#ea7a3a" stroke-width="1.1"/>
<rect x="628.3" y="116.9" width="2.4" height="13.1" fill="#f6aa72" stroke="#ea7a3a" stroke-width="1.1"/>
<rect x="632.3" y="118.1" width="2.4" height="9.1" fill="#683414" stroke="#ea7a3a" stroke-width="1.1"/>
<rect x="636.3" y="122.8" width="2.4" height="3.1" fill="#f6aa72" stroke="#ea7a3a" stroke-width="1.1"/>
<rect x="640.3" y="121.9" width="2.4" height="11.8" fill="#683414" stroke="#ea7a3a" stroke-width="1.1"/>
<rect x="644.3" y="121.9" width="2.4" height="10.6" fill="#f6aa72" stroke="#ea7a3a" stroke-width="1.1"/>
<rect x="648.3" y="111.0" width="2.4" height="9.6" fill="#f6aa72" stroke="#ea7a3a" stroke-width="1.1"/>
<rect x="652.3" y="107.5" width="2.4" height="2.5" fill="#f6aa72" stroke="#ea7a3a" stroke-width="1.1"/>
<rect x="656.3" y="106.9" width="2.4" height="10.6" fill="#683414" stroke="#ea7a3a" stroke-width="1.1"/>
<path d="M659.5 117.5H663.5" stroke="#ea7a3a" stroke-width="1" fill="none"/>
<rect x="664.3" y="111.9" width="2.4" height="3.7" fill="#f6aa72" stroke="#ea7a3a" stroke-width="1.1"/>
<rect x="668.3" y="110.6" width="2.4" height="23.1" fill="#683414" stroke="#ea7a3a" stroke-width="1.1"/>
<rect x="672.3" y="133.1" width="2.4" height="26.0" fill="#683414" stroke="#ea7a3a" stroke-width="1.1"/>
<rect x="676.3" y="159.4" width="2.4" height="9.3" fill="#683414" stroke="#ea7a3a" stroke-width="1.1"/>
<path d="M679.5 169.5H683.5" stroke="#ea7a3a" stroke-width="1" fill="none"/>
<rect x="684.3" y="168.1" width="2.4" height="7.5" fill="#683414" stroke="#ea7a3a" stroke-width="1.1"/>
<rect x="688.3" y="175.0" width="2.4" height="8.5" fill="#683414" stroke="#ea7a3a" stroke-width="1.1"/>
<rect x="692.3" y="126.2" width="2.4" height="56.3" fill="#f6aa72" stroke="#ea7a3a" stroke-width="1.1"/>
<rect x="696.3" y="125.0" width="2.4" height="8.1" fill="#683414" stroke="#ea7a3a" stroke-width="1.1"/>
<path d="M700.5 134.5H704.5" stroke="#ea7a3a" stroke-width="1" fill="none"/>
<path d="M704.5 132.5H708.5" stroke="#ea7a3a" stroke-width="1" fill="none"/>
<path d="M708.5 130.5H712.5" stroke="#ea7a3a" stroke-width="1" fill="none"/>
<rect x="713.3" y="130.0" width="2.4" height="33.1" fill="#683414" stroke="#ea7a3a" stroke-width="1.1"/>
<rect x="717.3" y="162.8" width="2.4" height="11.6" fill="#683414" stroke="#ea7a3a" stroke-width="1.1"/>
<rect x="721.3" y="174.0" width="2.4" height="2.5" fill="#683414" stroke="#ea7a3a" stroke-width="1.1"/>
<rect x="725.3" y="176.2" width="2.4" height="8.2" fill="#683414" stroke="#ea7a3a" stroke-width="1.1"/>
<path d="M728.5 182.5H732.5" stroke="#ea7a3a" stroke-width="1" fill="none"/>
<rect x="733.3" y="183.1" width="2.4" height="6.9" fill="#683414" stroke="#ea7a3a" stroke-width="1.1"/>
<rect x="737.3" y="171.0" width="2.4" height="17.7" fill="#f6aa72" stroke="#ea7a3a" stroke-width="1.1"/>
<rect x="741.3" y="170.2" width="2.4" height="11.3" fill="#683414" stroke="#ea7a3a" stroke-width="1.1"/>
<rect x="745.3" y="175.6" width="2.4" height="5.0" fill="#f6aa72" stroke="#ea7a3a" stroke-width="1.1"/>
<rect x="749.3" y="173.7" width="2.4" height="10.0" fill="#683414" stroke="#ea7a3a" stroke-width="1.1"/>
<rect x="753.3" y="166.9" width="2.4" height="10.6" fill="#f6aa72" stroke="#ea7a3a" stroke-width="1.1"/>
<rect x="757.3" y="165.6" width="2.4" height="8.1" fill="#683414" stroke="#ea7a3a" stroke-width="1.1"/>
<rect x="761.3" y="141.9" width="2.4" height="30.6" fill="#f6aa72" stroke="#ea7a3a" stroke-width="1.1"/>
<path d="M764.5 142.5H768.5" stroke="#ea7a3a" stroke-width="1" fill="none"/>
<rect x="769.3" y="141.9" width="2.4" height="5.9" fill="#683414" stroke="#ea7a3a" stroke-width="1.1"/>
<rect x="773.3" y="146.9" width="2.4" height="16.8" fill="#683414" stroke="#ea7a3a" stroke-width="1.1"/>
<path d="M777.5 163.5H781.5" stroke="#ea7a3a" stroke-width="1" fill="none"/>
<path d="M781.5 164.5H785.5" stroke="#ea7a3a" stroke-width="1" fill="none"/>
<rect x="786.3" y="157.5" width="2.4" height="6.9" fill="#f6aa72" stroke="#ea7a3a" stroke-width="1.1"/>
<rect x="790.3" y="156.2" width="2.4" height="17.5" fill="#683414" stroke="#ea7a3a" stroke-width="1.1"/>
<rect x="794.3" y="168.1" width="2.4" height="5.0" fill="#f6aa72" stroke="#ea7a3a" stroke-width="1.1"/>
<rect x="798.3" y="164.4" width="2.4" height="2.5" fill="#f6aa72" stroke="#ea7a3a" stroke-width="1.1"/>
<rect x="802.3" y="158.1" width="2.4" height="5.0" fill="#f6aa72" stroke="#ea7a3a" stroke-width="1.1"/>
<rect x="806.3" y="150.0" width="2.4" height="6.9" fill="#f6aa72" stroke="#ea7a3a" stroke-width="1.1"/>
<rect x="810.3" y="123.1" width="2.4" height="25.6" fill="#f6aa72" stroke="#ea7a3a" stroke-width="1.1"/>
<rect x="814.3" y="103.0" width="2.4" height="18.9" fill="#f6aa72" stroke="#ea7a3a" stroke-width="1.1"/>
<rect x="818.3" y="68.4" width="2.4" height="22.6" fill="#f6aa72" stroke="#ea7a3a" stroke-width="1.1"/>
<rect x="822.3" y="67.1" width="2.4" height="4.4" fill="#683414" stroke="#ea7a3a" stroke-width="1.1"/>
<rect x="826.3" y="70.9" width="2.4" height="5.6" fill="#683414" stroke="#ea7a3a" stroke-width="1.1"/>
<rect x="830.3" y="75.9" width="2.4" height="3.7" fill="#683414" stroke="#ea7a3a" stroke-width="1.1"/>
<rect x="834.3" y="79.0" width="2.4" height="19.0" fill="#683414" stroke="#ea7a3a" stroke-width="1.1"/>
<path d="M837.5 96.5H841.5" stroke="#ea7a3a" stroke-width="1" fill="none"/>
<path d="M841.5 100.5H845.5" stroke="#ea7a3a" stroke-width="1" fill="none"/>
<path d="M845.5 101.5H849.5" stroke="#ea7a3a" stroke-width="1" fill="none"/>
<path d="M849.5 106.5H853.5" stroke="#ea7a3a" stroke-width="1" fill="none"/>
<rect x="854.3" y="105.4" width="2.4" height="6.6" fill="#683414" stroke="#ea7a3a" stroke-width="1.1"/>
<rect x="859.3" y="99.0" width="2.4" height="11.4" fill="#f6aa72" stroke="#ea7a3a" stroke-width="1.1"/>
<path d="M862.5 100.5H866.5" stroke="#ea7a3a" stroke-width="1" fill="none"/>
<rect x="867.3" y="100.0" width="2.4" height="25.6" fill="#683414" stroke="#ea7a3a" stroke-width="1.1"/>
<rect x="871.3" y="115.6" width="2.4" height="9.4" fill="#f6aa72" stroke="#ea7a3a" stroke-width="1.1"/>
<path d="M874.5 119.5H878.5" stroke="#ea7a3a" stroke-width="1" fill="none"/>
<rect x="879.3" y="117.0" width="2.4" height="12.4" fill="#683414" stroke="#ea7a3a" stroke-width="1.1"/>
<path d="M72.1 41.0 L84.0 52.2 L99.0 64.8 L110.2 71.6 L114.0 76.0 L121.5 87.2 L129.0 96.0 L146.5 116.0 L155.2 121.6 L158.0 124.5 L170.5 135.0 L183.0 140.6 L195.5 146.2 L200.5 148.8 L208.0 149.4 L226.8 151.0 L233.0 153.5 L258.0 153.5 L264.2 154.4 L273.0 155.0 L283.0 160.0 L292.4 166.2 L302.0 171.5 L309.0 177.0 L317.2 183.0 L327.0 189.2 L341.4 198.6 L357.0 206.8 L373.2 213.0 L384.5 218.4 L397.0 220.7 L405.8 219.2 L415.2 219.0 L419.5 218.6 L424.0 216.6 L446.0 216.8 L451.0 216.6 L458.5 212.5 L466.0 210.6 L483.5 208.8 L492.8 206.9 L502.2 205.0 L511.5 201.2 L521.0 198.1 L533.5 193.1 L542.2 189.0 L554.8 186.9 L571.0 187.0 L588.5 186.9 L592.2 185.0 L606.0 183.5 L616.0 182.8 L623.5 180.0 L633.5 175.0 L645.0 169.4 L657.5 163.1 L667.5 159.0 L672.5 158.8 L682.5 160.6 L695.0 160.2 L705.5 156.4 L720.5 157.1 L730.5 160.0 L743.0 162.2 L755.5 163.1 L768.0 162.8 L793.0 162.8 L806.5 162.5 L814.0 158.8 L824.0 151.2 L831.5 146.9 L841.5 141.9 L850.2 138.8 L856.5 136.9 L862.8 134.8 L874.0 134.4 L879.6 133.1" stroke="#c8202a" stroke-width="1.3" fill="none" stroke-linejoin="round"/>
<path d="M58.4 41.0 L67.1 55.4 L74.0 67.9 L82.8 87.2 L85.9 92.2 L99.0 106.0 L104.0 108.5 L110.2 114.1 L114.0 121.5 L117.8 130.8 L121.5 138.9 L126.5 150.8 L134.0 162.0 L140.2 172.0 L146.5 182.5 L152.8 187.5 L158.0 188.9 L163.0 189.4 L171.4 194.8 L175.5 195.6 L195.5 194.0 L203.6 192.3 L208.0 187.5 L213.0 183.1 L219.2 180.6 L226.8 178.5 L233.0 180.6 L238.0 178.1 L244.2 174.4 L250.5 171.2 L256.8 168.5 L271.8 168.5 L278.0 173.1 L283.0 179.4 L289.2 185.6 L295.5 191.2 L302.0 195.9 L309.5 206.8 L317.2 216.8 L325.8 226.1 L333.2 231.1 L341.4 237.4 L348.2 241.8 L357.0 244.2 L365.8 247.0 L374.5 247.0 L382.0 250.5 L388.2 251.4 L394.5 251.1 L398.9 248.0 L405.8 240.5 L414.5 234.2 L424.5 227.4 L432.0 224.2 L439.5 222.0 L446.0 221.1 L451.0 220.6 L458.5 212.3 L466.0 206.4 L471.0 207.1 L476.0 202.7 L482.4 200.8 L489.9 201.2 L496.2 197.3 L506.2 191.2 L518.5 185.4 L531.0 176.0 L542.8 168.3 L552.4 168.6 L559.2 172.8 L566.0 176.0 L571.0 176.6 L587.0 176.4 L593.5 175.0 L608.5 174.8 L611.0 172.8 L617.2 172.1 L622.2 168.8 L631.0 160.6 L638.5 154.5 L645.0 150.6 L655.0 141.5 L662.5 137.5 L667.5 136.0 L672.5 137.5 L680.0 143.1 L689.6 150.0 L695.0 146.9 L699.2 145.6 L705.0 144.2 L710.7 142.6 L718.4 147.5 L728.8 155.6 L733.0 158.1 L737.5 160.0 L743.0 162.2 L750.5 165.0 L757.5 165.6 L763.0 163.1 L769.0 160.6 L787.8 161.2 L799.0 161.9 L806.5 161.2 L811.5 158.1 L816.5 150.0 L821.5 141.2 L826.5 133.1 L831.5 126.5 L839.0 120.8 L846.5 116.9 L854.0 116.0 L859.0 113.6 L864.0 112.5 L869.0 114.7 L879.6 115.1" stroke="#1414c4" stroke-width="1.15" fill="none" stroke-linejoin="round"/>
</g>
<g clip-path="url(#cc)">
<path d="M13.5 287.0V292.4M17.5 287.0V291.9M21.5 287.0V291.3M25.5 287.0V290.9M29.5 287.0V292.1M33.5 287.0V293.4M37.5 287.0V294.2M41.5 287.0V294.0M45.5 287.0V293.9M49.5 287.0V293.7M53.5 287.0V294.7M57.5 287.0V295.8M61.5 287.0V296.6M65.5 287.0V297.4M69.5 287.0V297.7M74.5 287.0V297.5M78.5 287.0V297.0M82.5 287.0V296.7M86.5 287.0V295.5M90.5 287.0V292.6M94.5 287.0V290.6M98.5 287.0V289.0M102.5 287.0V288.5M106.5 287.0V288.5M110.5 287.0V288.9M114.5 287.0V290.3M118.5 287.0V291.6M122.5 287.0V292.4M126.5 287.0V292.5M130.5 287.0V292.4M134.5 287.0V291.6M138.5 287.0V291.4M142.5 287.0V290.1M146.5 287.0V288.9M151.5 288.0V286.5M155.5 288.0V284.9M159.5 288.0V284.0M163.5 288.0V283.3M167.5 288.0V282.6M171.5 288.0V282.1M175.5 288.0V282.0M179.5 288.0V281.9M183.5 288.0V281.8M187.5 288.0V281.5M191.5 288.0V281.2M195.5 288.0V281.2M199.5 288.0V281.7M203.5 288.0V281.9M207.5 288.0V280.1M211.5 288.0V279.6M215.5 288.0V280.3M219.5 288.0V281.1M223.5 288.0V282.2M227.5 288.0V282.2M232.5 288.0V285.4M236.5 288.0V284.9M240.5 288.0V284.5M244.5 288.0V284.3M248.5 288.0V284.3M252.5 288.0V284.4M256.5 288.0V284.7M260.5 288.0V286.0M264.5 288.0V286.5M268.5 288.0V286.5M272.5 287.0V288.5M276.5 287.0V289.2M280.5 287.0V293.2M284.5 287.0V295.4M288.5 287.0V295.1M292.5 287.0V294.8M296.5 287.0V295.0M300.5 287.0V295.2M304.5 287.0V295.3M309.5 287.0V295.2M313.5 287.0V295.2M317.5 287.0V294.9M321.5 287.0V294.5M325.5 287.0V294.1M329.5 287.0V292.8M333.5 287.0V291.5M337.5 287.0V290.3M341.5 287.0V289.8M345.5 287.0V289.3M349.5 287.0V288.5M353.5 288.0V286.5M357.5 288.0V286.1M361.5 288.0V285.3M365.5 288.0V284.8M369.5 288.0V284.3M373.5 288.0V284.5M377.5 288.0V284.9M381.5 288.0V285.2M385.5 288.0V285.3M390.5 288.0V285.5M394.5 288.0V285.1M398.5 288.0V284.5M402.5 288.0V283.8M406.5 288.0V283.1M410.5 288.0V282.3M414.5 288.0V281.5M418.5 288.0V281.7M422.5 288.0V281.9M426.5 288.0V282.2M430.5 288.0V283.1M434.5 288.0V284.0M438.5 288.0V284.8M442.5 288.0V285.5M446.5 288.0V286.3M450.5 288.0V286.4M454.5 288.0V286.1M458.5 288.0V285.8M462.5 288.0V285.3M467.5 288.0V285.6M471.5 288.0V286.5M475.5 287.0V288.5M479.5 287.0V288.5M483.5 287.0V288.5M487.5 287.0V288.7M491.5 287.0V289.6M495.5 287.0V289.2M499.5 287.0V288.5M503.5 287.0V288.5M507.5 287.0V288.5M511.5 287.0V288.5M515.5 287.0V288.5M519.5 287.0V288.5M523.5 287.0V288.5M527.5 288.0V286.5M531.5 288.0V286.5M535.5 288.0V286.5M539.5 288.0V286.5M544.5 287.0V288.5M548.5 287.0V289.9M552.5 287.0V291.1M556.5 287.0V292.0M560.5 287.0V292.5M564.5 287.0V293.0M568.5 287.0V293.0M572.5 287.0V292.7M576.5 287.0V292.1M580.5 287.0V291.1M584.5 287.0V290.5M588.5 287.0V289.9M592.5 287.0V289.1M596.5 287.0V288.5M600.5 287.0V288.5M604.5 287.0V288.5M608.5 288.0V286.5M612.5 288.0V286.5M616.5 288.0V286.5M620.5 288.0V286.5M625.5 288.0V285.4M629.5 288.0V284.8M633.5 288.0V284.4M637.5 288.0V284.2M641.5 288.0V284.7M645.5 288.0V285.2M649.5 288.0V285.3M653.5 288.0V285.2M657.5 288.0V285.8M661.5 288.0V286.5M665.5 288.0V286.5M669.5 287.0V288.5M673.5 287.0V288.5M677.5 287.0V290.1M681.5 287.0V291.9M685.5 287.0V293.2M689.5 287.0V294.5M693.5 287.0V292.9M697.5 287.0V291.0M702.5 287.0V289.3M706.5 287.0V288.5M710.5 287.0V288.7M714.5 287.0V289.2M718.5 287.0V290.2M722.5 287.0V291.2M726.5 287.0V292.1M730.5 287.0V293.0M734.5 287.0V293.2M738.5 287.0V292.7M742.5 287.0V292.3M746.5 287.0V291.7M750.5 287.0V291.1M754.5 287.0V290.6M758.5 287.0V288.8M762.5 287.0V288.5M766.5 288.0V286.5M770.5 288.0V286.5M774.5 288.0V286.5M779.5 288.0V286.5M783.5 288.0V286.5M787.5 288.0V286.5M791.5 288.0V286.5M795.5 288.0V286.5M799.5 288.0V286.5M803.5 288.0V286.5M807.5 288.0V286.5M811.5 288.0V285.1M815.5 288.0V282.3M819.5 288.0V279.5M823.5 288.0V278.5M827.5 288.0V278.7M831.5 288.0V280.3M835.5 288.0V282.0M839.5 288.0V283.6M843.5 288.0V285.3M847.5 288.0V286.5M851.5 287.0V289.3M855.5 287.0V289.9M860.5 287.0V290.2M864.5 287.0V290.7M868.5 287.0V291.3M872.5 287.0V291.6M876.5 287.0V291.7M880.5 287.0V291.7" stroke="#b6262e" stroke-width="1.7" fill="none"/>
<path d="M14.0 290.9 L25.1 292.0 L36.2 297.6 L49.6 302.0 L58.4 307.6 L71.8 315.3 L85.1 320.2 L96.2 316.4 L109.6 314.2 L120.7 320.2 L129.6 323.1 L138.4 323.8 L147.3 322.0 L156.2 316.4 L169.6 309.6 L182.9 303.1 L194.0 297.6 L202.9 294.8 L209.6 288.8 L218.4 285.4 L222.8 285.6 L227.3 284.2 L232.5 286.4 L238.0 284.7 L245.1 283.1 L256.2 281.6 L262.9 283.1 L270.0 283.1 L276.7 286.4 L283.3 294.2 L292.2 297.1 L303.3 300.9 L314.4 305.3 L325.6 308.2 L336.7 306.0 L347.8 305.3 L358.9 300.9 L370.0 297.6 L381.1 296.4 L392.2 294.9 L403.3 289.8 L414.4 283.1 L425.6 279.8 L438.9 279.3 L447.8 279.3 L458.9 277.6 L465.6 275.8 L472.2 278.0 L483.3 278.0 L492.2 279.8 L503.3 278.0 L514.4 277.6 L526.0 276.4 L537.1 274.9 L546.0 275.3 L554.9 280.2 L566.0 284.7 L574.9 286.4 L586.0 286.4 L597.1 285.3 L608.2 284.7 L619.3 283.1 L628.2 279.3 L637.1 276.4 L646.0 275.8 L654.9 274.2 L663.8 274.9 L672.7 276.4 L681.6 283.1 L690.4 288.6 L697.1 286.2 L706.0 284.2 L714.9 286.2 L723.8 290.4 L732.7 294.2 L743.8 294.9 L754.9 294.6 L761.6 291.5 L770.4 289.5 L783.3 288.7 L794.4 288.2 L805.6 287.6 L812.2 284.2 L818.9 276.4 L825.6 271.3 L834.4 270.4 L843.3 271.3 L852.2 274.2 L861.1 275.8 L870.0 278.7 L880.0 281.6" stroke="#0e0e66" stroke-width="1.25" fill="none" stroke-linejoin="round"/>
<g fill="#e0242e"><circle cx="13.5" cy="286.0" r="1.7"/><circle cx="17.5" cy="286.9" r="1.7"/><circle cx="21.5" cy="287.8" r="1.7"/><circle cx="25.5" cy="288.8" r="1.7"/><circle cx="29.5" cy="289.6" r="1.7"/><circle cx="33.5" cy="290.4" r="1.7"/><circle cx="37.5" cy="291.4" r="1.7"/><circle cx="41.5" cy="292.8" r="1.7"/><circle cx="45.5" cy="294.3" r="1.7"/><circle cx="49.5" cy="295.8" r="1.7"/><circle cx="53.5" cy="297.3" r="1.7"/><circle cx="57.5" cy="298.8" r="1.7"/><circle cx="61.5" cy="300.3" r="1.7"/><circle cx="65.5" cy="301.8" r="1.7"/><circle cx="69.5" cy="303.8" r="1.7"/><circle cx="74.5" cy="306.3" r="1.7"/><circle cx="78.5" cy="308.2" r="1.7"/><circle cx="82.5" cy="310.0" r="1.7"/><circle cx="86.5" cy="311.7" r="1.7"/><circle cx="90.5" cy="313.2" r="1.7"/><circle cx="94.5" cy="313.9" r="1.7"/><circle cx="98.5" cy="314.5" r="1.7"/><circle cx="102.5" cy="314.5" r="1.7"/><circle cx="106.5" cy="313.7" r="1.7"/><circle cx="110.5" cy="313.3" r="1.7"/><circle cx="114.5" cy="314.1" r="1.7"/><circle cx="118.5" cy="314.9" r="1.7"/><circle cx="122.5" cy="315.8" r="1.7"/><circle cx="126.5" cy="317.0" r="1.7"/><circle cx="130.5" cy="318.2" r="1.7"/><circle cx="134.5" cy="319.4" r="1.7"/><circle cx="138.5" cy="319.8" r="1.7"/><circle cx="142.5" cy="320.3" r="1.7"/><circle cx="146.5" cy="320.8" r="1.7"/><circle cx="151.5" cy="320.1" r="1.7"/><circle cx="155.5" cy="319.4" r="1.7"/><circle cx="159.5" cy="318.2" r="1.7"/><circle cx="163.5" cy="316.9" r="1.7"/><circle cx="167.5" cy="315.6" r="1.7"/><circle cx="171.5" cy="314.0" r="1.7"/><circle cx="175.5" cy="312.2" r="1.7"/><circle cx="179.5" cy="310.4" r="1.7"/><circle cx="183.5" cy="308.5" r="1.7"/><circle cx="187.5" cy="306.8" r="1.7"/><circle cx="191.5" cy="305.1" r="1.7"/><circle cx="195.5" cy="303.4" r="1.7"/><circle cx="199.5" cy="301.6" r="1.7"/><circle cx="203.5" cy="299.9" r="1.7"/><circle cx="207.5" cy="298.1" r="1.7"/><circle cx="211.5" cy="295.9" r="1.7"/><circle cx="215.5" cy="293.8" r="1.7"/><circle cx="219.5" cy="291.9" r="1.7"/><circle cx="223.5" cy="290.7" r="1.7"/><circle cx="227.5" cy="289.6" r="1.7"/><circle cx="232.5" cy="288.5" r="1.7"/><circle cx="236.5" cy="287.8" r="1.7"/><circle cx="240.5" cy="287.1" r="1.7"/><circle cx="244.5" cy="286.5" r="1.7"/><circle cx="248.5" cy="285.8" r="1.7"/><circle cx="252.5" cy="285.2" r="1.7"/><circle cx="256.5" cy="284.5" r="1.7"/><circle cx="260.5" cy="284.1" r="1.7"/><circle cx="264.5" cy="283.9" r="1.7"/><circle cx="268.5" cy="283.7" r="1.7"/><circle cx="272.5" cy="284.0" r="1.7"/><circle cx="276.5" cy="284.6" r="1.7"/><circle cx="280.5" cy="285.2" r="1.7"/><circle cx="284.5" cy="286.7" r="1.7"/><circle cx="288.5" cy="288.3" r="1.7"/><circle cx="292.5" cy="289.9" r="1.7"/><circle cx="296.5" cy="291.1" r="1.7"/><circle cx="300.5" cy="292.3" r="1.7"/><circle cx="304.5" cy="293.6" r="1.7"/><circle cx="309.5" cy="295.6" r="1.7"/><circle cx="313.5" cy="297.2" r="1.7"/><circle cx="317.5" cy="298.7" r="1.7"/><circle cx="321.5" cy="300.1" r="1.7"/><circle cx="325.5" cy="301.6" r="1.7"/><circle cx="329.5" cy="302.1" r="1.7"/><circle cx="333.5" cy="302.7" r="1.7"/><circle cx="337.5" cy="303.2" r="1.7"/><circle cx="341.5" cy="303.4" r="1.7"/><circle cx="345.5" cy="303.7" r="1.7"/><circle cx="349.5" cy="303.6" r="1.7"/><circle cx="353.5" cy="303.2" r="1.7"/><circle cx="357.5" cy="302.8" r="1.7"/><circle cx="361.5" cy="302.3" r="1.7"/><circle cx="365.5" cy="301.6" r="1.7"/><circle cx="369.5" cy="301.0" r="1.7"/><circle cx="373.5" cy="300.2" r="1.7"/><circle cx="377.5" cy="299.4" r="1.7"/><circle cx="381.5" cy="298.6" r="1.7"/><circle cx="385.5" cy="298.0" r="1.7"/><circle cx="390.5" cy="297.2" r="1.7"/><circle cx="394.5" cy="296.2" r="1.7"/><circle cx="398.5" cy="295.0" r="1.7"/><circle cx="402.5" cy="293.8" r="1.7"/><circle cx="406.5" cy="292.3" r="1.7"/><circle cx="410.5" cy="290.7" r="1.7"/><circle cx="414.5" cy="289.1" r="1.7"/><circle cx="418.5" cy="287.7" r="1.7"/><circle cx="422.5" cy="286.4" r="1.7"/><circle cx="426.5" cy="285.1" r="1.7"/><circle cx="430.5" cy="284.0" r="1.7"/><circle cx="434.5" cy="283.0" r="1.7"/><circle cx="438.5" cy="282.0" r="1.7"/><circle cx="442.5" cy="281.3" r="1.7"/><circle cx="446.5" cy="280.5" r="1.7"/><circle cx="450.5" cy="280.0" r="1.7"/><circle cx="454.5" cy="279.7" r="1.7"/><circle cx="458.5" cy="279.3" r="1.7"/><circle cx="462.5" cy="278.9" r="1.7"/><circle cx="467.5" cy="278.3" r="1.7"/><circle cx="471.5" cy="277.9" r="1.7"/><circle cx="475.5" cy="277.8" r="1.7"/><circle cx="479.5" cy="277.7" r="1.7"/><circle cx="483.5" cy="277.6" r="1.7"/><circle cx="487.5" cy="277.6" r="1.7"/><circle cx="491.5" cy="277.6" r="1.7"/><circle cx="495.5" cy="277.6" r="1.7"/><circle cx="499.5" cy="277.6" r="1.7"/><circle cx="503.5" cy="277.6" r="1.7"/><circle cx="507.5" cy="277.4" r="1.7"/><circle cx="511.5" cy="277.2" r="1.7"/><circle cx="515.5" cy="277.0" r="1.7"/><circle cx="519.5" cy="276.8" r="1.7"/><circle cx="523.5" cy="276.6" r="1.7"/><circle cx="527.5" cy="276.3" r="1.7"/><circle cx="531.5" cy="275.9" r="1.7"/><circle cx="535.5" cy="275.5" r="1.7"/><circle cx="539.5" cy="275.1" r="1.7"/><circle cx="544.5" cy="274.6" r="1.7"/><circle cx="548.5" cy="274.3" r="1.7"/><circle cx="552.5" cy="275.3" r="1.7"/><circle cx="556.5" cy="276.4" r="1.7"/><circle cx="560.5" cy="277.4" r="1.7"/><circle cx="564.5" cy="278.6" r="1.7"/><circle cx="568.5" cy="279.7" r="1.7"/><circle cx="572.5" cy="280.7" r="1.7"/><circle cx="576.5" cy="281.8" r="1.7"/><circle cx="580.5" cy="282.8" r="1.7"/><circle cx="584.5" cy="283.4" r="1.7"/><circle cx="588.5" cy="283.8" r="1.7"/><circle cx="592.5" cy="284.2" r="1.7"/><circle cx="596.5" cy="284.4" r="1.7"/><circle cx="600.5" cy="284.6" r="1.7"/><circle cx="604.5" cy="284.7" r="1.7"/><circle cx="608.5" cy="284.7" r="1.7"/><circle cx="612.5" cy="284.7" r="1.7"/><circle cx="616.5" cy="284.4" r="1.7"/><circle cx="620.5" cy="283.5" r="1.7"/><circle cx="625.5" cy="282.5" r="1.7"/><circle cx="629.5" cy="281.6" r="1.7"/><circle cx="633.5" cy="280.6" r="1.7"/><circle cx="637.5" cy="279.7" r="1.7"/><circle cx="641.5" cy="278.9" r="1.7"/><circle cx="645.5" cy="278.1" r="1.7"/><circle cx="649.5" cy="277.4" r="1.7"/><circle cx="653.5" cy="276.7" r="1.7"/><circle cx="657.5" cy="276.1" r="1.7"/><circle cx="661.5" cy="275.7" r="1.7"/><circle cx="665.5" cy="275.5" r="1.7"/><circle cx="669.5" cy="275.3" r="1.7"/><circle cx="673.5" cy="276.2" r="1.7"/><circle cx="677.5" cy="277.5" r="1.7"/><circle cx="681.5" cy="278.7" r="1.7"/><circle cx="685.5" cy="279.9" r="1.7"/><circle cx="689.5" cy="281.0" r="1.7"/><circle cx="693.5" cy="282.1" r="1.7"/><circle cx="697.5" cy="282.6" r="1.7"/><circle cx="702.5" cy="283.2" r="1.7"/><circle cx="706.5" cy="283.6" r="1.7"/><circle cx="710.5" cy="284.0" r="1.7"/><circle cx="714.5" cy="284.4" r="1.7"/><circle cx="718.5" cy="285.2" r="1.7"/><circle cx="722.5" cy="286.1" r="1.7"/><circle cx="726.5" cy="287.0" r="1.7"/><circle cx="730.5" cy="287.8" r="1.7"/><circle cx="734.5" cy="288.6" r="1.7"/><circle cx="738.5" cy="289.3" r="1.7"/><circle cx="742.5" cy="290.0" r="1.7"/><circle cx="746.5" cy="290.6" r="1.7"/><circle cx="750.5" cy="291.1" r="1.7"/><circle cx="754.5" cy="291.5" r="1.7"/><circle cx="758.5" cy="291.6" r="1.7"/><circle cx="762.5" cy="291.1" r="1.7"/><circle cx="766.5" cy="290.6" r="1.7"/><circle cx="770.5" cy="290.1" r="1.7"/><circle cx="774.5" cy="289.6" r="1.7"/><circle cx="779.5" cy="289.1" r="1.7"/><circle cx="783.5" cy="288.9" r="1.7"/><circle cx="787.5" cy="288.8" r="1.7"/><circle cx="791.5" cy="288.6" r="1.7"/><circle cx="795.5" cy="288.5" r="1.7"/><circle cx="799.5" cy="288.3" r="1.7"/><circle cx="803.5" cy="287.9" r="1.7"/><circle cx="807.5" cy="287.5" r="1.7"/><circle cx="811.5" cy="287.0" r="1.7"/><circle cx="815.5" cy="285.6" r="1.7"/><circle cx="819.5" cy="283.9" r="1.7"/><circle cx="823.5" cy="281.9" r="1.7"/><circle cx="827.5" cy="279.9" r="1.7"/><circle cx="831.5" cy="277.9" r="1.7"/><circle cx="835.5" cy="276.1" r="1.7"/><circle cx="839.5" cy="274.8" r="1.7"/><circle cx="843.5" cy="273.6" r="1.7"/><circle cx="847.5" cy="272.8" r="1.7"/><circle cx="851.5" cy="272.1" r="1.7"/><circle cx="855.5" cy="272.4" r="1.7"/><circle cx="860.5" cy="273.0" r="1.7"/><circle cx="864.5" cy="273.7" r="1.7"/><circle cx="868.5" cy="274.4" r="1.7"/><circle cx="872.5" cy="275.4" r="1.7"/><circle cx="876.5" cy="276.4" r="1.7"/><circle cx="880.5" cy="277.4" r="1.7"/></g>
</g>
<g clip-path="url(#cr)">
<path d="M14.0 378.7 L21.8 365.3 L26.2 373.1 L30.7 376.4 L35.1 381.6 L40.7 380.9 L44.0 383.1 L48.0 390.0 L55.0 398.0 L60.0 401.0 L66.0 399.5 L73.6 400.2 L81.8 402.0 L85.1 400.2 L86.2 398.7 L90.7 383.1 L98.4 384.7 L102.9 384.7 L107.3 379.3 L111.1 386.4 L114.0 396.4 L118.4 399.3 L122.9 399.3 L127.3 395.3 L130.7 398.0 L135.1 392.7 L138.4 393.1 L142.9 389.8 L147.3 389.8 L151.8 385.3 L159.6 372.7 L165.1 375.3 L171.8 379.3 L179.6 369.8 L185.1 367.6 L191.8 366.9 L196.2 369.1 L202.9 362.0 L207.3 349.8 L211.8 349.1 L215.1 352.0 L220.7 361.6 L222.9 363.1 L227.3 356.4 L232.9 372.0 L238.4 359.8 L242.9 355.3 L248.4 359.8 L252.9 355.8 L258.4 360.9 L265.1 368.7 L268.4 362.0 L270.0 360.9 L272.2 360.9 L275.6 375.8 L280.0 378.7 L284.4 384.2 L288.9 378.0 L297.8 378.0 L301.1 376.9 L304.4 379.8 L308.9 389.4 L310.0 388.6 L314.4 386.0 L320.0 388.2 L325.6 388.2 L328.9 382.0 L333.3 377.1 L337.8 380.9 L341.1 379.3 L345.6 383.8 L350.0 375.8 L354.0 370.9 L361.1 374.2 L366.7 370.9 L373.3 369.1 L377.8 374.2 L381.8 380.2 L385.6 368.7 L390.0 368.2 L394.4 364.7 L398.9 353.6 L402.9 348.2 L406.7 350.9 L410.4 354.9 L414.4 350.4 L417.8 352.0 L422.2 349.3 L426.7 355.3 L430.0 356.4 L435.6 354.2 L440.0 358.0 L446.7 364.7 L451.1 356.4 L456.2 347.6 L461.1 347.6 L466.0 344.7 L468.4 353.1 L471.6 368.2 L475.6 351.6 L478.9 358.0 L484.4 360.2 L487.8 362.4 L491.6 366.9 L495.6 354.2 L500.0 357.6 L503.3 357.1 L508.9 354.9 L514.4 356.4 L520.0 353.1 L526.0 350.9 L533.8 348.7 L538.2 349.3 L543.3 349.3 L548.2 363.1 L552.7 359.8 L556.7 373.1 L561.6 372.0 L568.2 367.6 L571.6 368.7 L577.1 364.2 L582.7 363.8 L589.3 359.8 L592.2 356.4 L596.7 366.9 L601.1 360.2 L606.0 360.9 L612.2 357.6 L616.7 359.3 L620.4 355.3 L624.2 346.0 L629.3 341.8 L632.7 346.9 L636.0 345.3 L640.4 352.0 L647.1 345.3 L650.4 343.1 L653.8 343.8 L657.6 350.9 L661.6 350.4 L665.6 347.6 L670.0 363.1 L673.8 372.7 L678.2 375.3 L681.6 374.9 L686.0 378.0 L689.3 381.6 L693.2 356.8 L697.0 359.3 L703.5 358.1 L710.4 358.1 L714.4 370.9 L718.5 374.9 L723.0 375.5 L727.4 378.1 L731.6 378.4 L734.6 379.8 L738.5 370.6 L742.4 374.2 L746.5 371.3 L750.4 372.9 L754.1 366.4 L758.0 368.9 L761.6 357.1 L767.8 357.1 L774.2 366.0 L778.0 364.7 L782.1 366.7 L786.0 362.4 L791.1 370.4 L796.7 366.4 L803.3 363.1 L807.8 357.6 L812.2 347.6 L816.7 339.8 L820.0 334.9 L823.3 337.6 L826.7 339.8 L831.1 342.4 L835.6 348.7 L841.1 349.8 L845.6 353.1 L850.0 355.8 L855.6 359.3 L860.0 354.2 L863.3 353.1 L867.8 368.2 L872.2 363.8 L875.6 363.8 L880.0 369.1 L880.0 405 L14.0 405 Z" fill="url(#rg)" stroke="none"/>
<line x1="13.5" x2="880.5" y1="340.8" y2="340.8" stroke="#1616b4" stroke-width="1.6"/>
<line x1="13.5" x2="880.5" y1="389.4" y2="389.4" stroke="#1616b4" stroke-width="1.6"/>
<path d="M14.0 378.7 L21.8 365.3 L26.2 373.1 L30.7 376.4 L35.1 381.6 L40.7 380.9 L44.0 383.1" stroke="#f3982e" stroke-width="1.1" fill="none" stroke-linejoin="round"/>
<path d="M44.0 383.1 L48.0 390.0 L55.0 398.0 L60.0 401.0 L66.0 399.5 L73.6 400.2 L81.8 402.0 L85.1 400.2 L86.2 398.7" stroke="#22d822" stroke-width="1.1" fill="none" stroke-linejoin="round"/>
<path d="M86.2 398.7 L90.7 383.1 L98.4 384.7 L102.9 384.7 L107.3 379.3 L111.1 386.4" stroke="#f3982e" stroke-width="1.1" fill="none" stroke-linejoin="round"/>
<path d="M111.1 386.4 L114.0 396.4 L118.4 399.3 L122.9 399.3 L127.3 395.3 L130.7 398.0 L135.1 392.7 L138.4 393.1 L142.9 389.8 L147.3 389.8" stroke="#22d822" stroke-width="1.1" fill="none" stroke-linejoin="round"/>
<path d="M147.3 389.8 L151.8 385.3 L159.6 372.7 L165.1 375.3 L171.8 379.3 L179.6 369.8 L185.1 367.6 L191.8 366.9 L196.2 369.1 L202.9 362.0 L207.3 349.8 L211.8 349.1 L215.1 352.0 L220.7 361.6 L222.9 363.1 L227.3 356.4 L232.9 372.0 L238.4 359.8 L242.9 355.3 L248.4 359.8 L252.9 355.8 L258.4 360.9 L265.1 368.7 L268.4 362.0 L270.0 360.9 L272.2 360.9 L275.6 375.8 L280.0 378.7 L284.4 384.2 L288.9 378.0 L297.8 378.0 L301.1 376.9 L304.4 379.8" stroke="#f3982e" stroke-width="1.1" fill="none" stroke-linejoin="round"/>
<path d="M304.4 379.8 L308.9 389.4" stroke="#22d822" stroke-width="1.1" fill="none" stroke-linejoin="round"/>
<path d="M308.9 389.4 L310.0 388.6 L314.4 386.0 L320.0 388.2 L325.6 388.2 L328.9 382.0 L333.3 377.1 L337.8 380.9 L341.1 379.3 L345.6 383.8 L350.0 375.8 L354.0 370.9 L361.1 374.2 L366.7 370.9 L373.3 369.1 L377.8 374.2 L381.8 380.2 L385.6 368.7 L390.0 368.2 L394.4 364.7 L398.9 353.6 L402.9 348.2 L406.7 350.9 L410.4 354.9 L414.4 350.4 L417.8 352.0 L422.2 349.3 L426.7 355.3 L430.0 356.4 L435.6 354.2 L440.0 358.0 L446.7 364.7 L451.1 356.4 L456.2 347.6 L461.1 347.6 L466.0 344.7 L468.4 353.1 L471.6 368.2 L475.6 351.6 L478.9 358.0 L484.4 360.2 L487.8 362.4 L491.6 366.9 L495.6 354.2 L500.0 357.6 L503.3 357.1 L508.9 354.9 L514.4 356.4 L520.0 353.1 L526.0 350.9 L533.8 348.7 L538.2 349.3 L543.3 349.3 L548.2 363.1 L552.7 359.8 L556.7 373.1 L561.6 372.0 L568.2 367.6 L571.6 368.7 L577.1 364.2 L582.7 363.8 L589.3 359.8 L592.2 356.4 L596.7 366.9 L601.1 360.2 L606.0 360.9 L612.2 357.6 L616.7 359.3 L620.4 355.3 L624.2 346.0 L629.3 341.8 L632.7 346.9 L636.0 345.3 L640.4 352.0 L647.1 345.3 L650.4 343.1 L653.8 343.8 L657.6 350.9 L661.6 350.4 L665.6 347.6 L670.0 363.1 L673.8 372.7 L678.2 375.3 L681.6 374.9 L686.0 378.0 L689.3 381.6 L693.2 356.8 L697.0 359.3 L703.5 358.1 L710.4 358.1 L714.4 370.9 L718.5 374.9 L723.0 375.5 L727.4 378.1 L731.6 378.4 L734.6 379.8 L738.5 370.6 L742.4 374.2 L746.5 371.3 L750.4 372.9 L754.1 366.4 L758.0 368.9 L761.6 357.1 L767.8 357.1 L774.2 366.0 L778.0 364.7 L782.1 366.7 L786.0 362.4 L791.1 370.4 L796.7 366.4 L803.3 363.1 L807.8 357.6 L812.2 347.6" stroke="#f3982e" stroke-width="1.1" fill="none" stroke-linejoin="round"/>
<path d="M812.2 347.6 L816.7 339.8 L820.0 334.9 L823.3 337.6 L826.7 339.8" stroke="#c030d0" stroke-width="1.1" fill="none" stroke-linejoin="round"/>
<path d="M826.7 339.8 L831.1 342.4 L835.6 348.7 L841.1 349.8 L845.6 353.1 L850.0 355.8 L855.6 359.3 L860.0 354.2 L863.3 353.1 L867.8 368.2 L872.2 363.8 L875.6 363.8 L880.0 369.1" stroke="#f3982e" stroke-width="1.1" fill="none" stroke-linejoin="round"/>
</g>
<rect x="13.5" y="41.5" width="873.0" height="220.0" fill="none" stroke="#a8bdd0" stroke-width="1"/>
<rect x="13.5" y="267.5" width="873.0" height="59.0" fill="none" stroke="#a8bdd0" stroke-width="1"/>
<rect x="13.5" y="332.5" width="873.0" height="73.0" fill="none" stroke="#a8bdd0" stroke-width="1"/>
<line x1="13.5" x2="886.5" y1="405.5" y2="405.5" stroke="#a8bdd0" stroke-width="1"/>
<line x1="25.5" x2="25.5" y1="405.5" y2="409.5" stroke="#a8bdd0" stroke-width="1"/>
<text x="25.0" y="428" text-anchor="middle" class="ax">7</text>
<line x1="49.5" x2="49.5" y1="405.5" y2="409.5" stroke="#a8bdd0" stroke-width="1"/>
<text x="49.0" y="428" text-anchor="middle" class="ax">8</text>
<line x1="74.5" x2="74.5" y1="405.5" y2="409.5" stroke="#a8bdd0" stroke-width="1"/>
<text x="74.0" y="428" text-anchor="middle" class="ax">9</text>
<line x1="98.5" x2="98.5" y1="405.5" y2="409.5" stroke="#a8bdd0" stroke-width="1"/>
<text x="98.0" y="428" text-anchor="middle" class="ax">10</text>
<line x1="122.5" x2="122.5" y1="405.5" y2="409.5" stroke="#a8bdd0" stroke-width="1"/>
<text x="122.0" y="428" text-anchor="middle" class="ax">11</text>
<line x1="146.5" x2="146.5" y1="405.5" y2="409.5" stroke="#a8bdd0" stroke-width="1"/>
<text x="146.0" y="428" text-anchor="middle" class="ax">14</text>
<line x1="171.5" x2="171.5" y1="405.5" y2="409.5" stroke="#a8bdd0" stroke-width="1"/>
<text x="171.0" y="428" text-anchor="middle" class="ax">15</text>
<line x1="195.5" x2="195.5" y1="405.5" y2="409.5" stroke="#a8bdd0" stroke-width="1"/>
<text x="195.0" y="428" text-anchor="middle" class="ax">16</text>
<line x1="219.5" x2="219.5" y1="405.5" y2="409.5" stroke="#a8bdd0" stroke-width="1"/>
<text x="219.0" y="428" text-anchor="middle" class="ax">17</text>
<line x1="244.5" x2="244.5" y1="405.5" y2="409.5" stroke="#a8bdd0" stroke-width="1"/>
<text x="244.0" y="428" text-anchor="middle" class="ax">18</text>
<line x1="268.5" x2="268.5" y1="405.5" y2="409.5" stroke="#a8bdd0" stroke-width="1"/>
<text x="268.0" y="428" text-anchor="middle" class="ax">21</text>
<line x1="292.5" x2="292.5" y1="405.5" y2="409.5" stroke="#a8bdd0" stroke-width="1"/>
<text x="292.0" y="428" text-anchor="middle" class="ax">22</text>
<line x1="317.5" x2="317.5" y1="405.5" y2="409.5" stroke="#a8bdd0" stroke-width="1"/>
<text x="317.0" y="428" text-anchor="middle" class="ax">23</text>
<line x1="341.5" x2="341.5" y1="405.5" y2="409.5" stroke="#a8bdd0" stroke-width="1"/>
<text x="341.0" y="428" text-anchor="middle" class="ax">24</text>
<line x1="365.5" x2="365.5" y1="405.5" y2="409.5" stroke="#a8bdd0" stroke-width="1"/>
<text x="365.0" y="428" text-anchor="middle" class="ax">25</text>
<line x1="390.5" x2="390.5" y1="405.5" y2="409.5" stroke="#a8bdd0" stroke-width="1"/>
<text x="390.0" y="428" text-anchor="middle" class="ax">28</text>
<line x1="414.5" x2="414.5" y1="405.5" y2="409.5" stroke="#a8bdd0" stroke-width="1"/>
<text x="414.0" y="428" text-anchor="middle" class="ax">29</text>
<line x1="438.5" x2="438.5" y1="405.5" y2="409.5" stroke="#a8bdd0" stroke-width="1"/>
<text x="438.0" y="428" text-anchor="middle" class="ax">30</text>
<line x1="462.5" x2="462.5" y1="405.5" y2="409.5" stroke="#a8bdd0" stroke-width="1"/>
<text x="462.0" y="428" text-anchor="middle" class="ax">1</text>
<line x1="487.5" x2="487.5" y1="405.5" y2="409.5" stroke="#a8bdd0" stroke-width="1"/>
<text x="487.0" y="428" text-anchor="middle" class="ax">2</text>
<line x1="511.5" x2="511.5" y1="405.5" y2="409.5" stroke="#a8bdd0" stroke-width="1"/>
<text x="511.0" y="428" text-anchor="middle" class="ax">5</text>
<line x1="535.5" x2="535.5" y1="405.5" y2="409.5" stroke="#a8bdd0" stroke-width="1"/>
<text x="535.0" y="428" text-anchor="middle" class="ax">6</text>
<line x1="560.5" x2="560.5" y1="405.5" y2="409.5" stroke="#a8bdd0" stroke-width="1"/>
<text x="560.0" y="428" text-anchor="middle" class="ax">7</text>
<line x1="584.5" x2="584.5" y1="405.5" y2="409.5" stroke="#a8bdd0" stroke-width="1"/>
<text x="584.0" y="428" text-anchor="middle" class="ax">8</text>
<line x1="608.5" x2="608.5" y1="405.5" y2="409.5" stroke="#a8bdd0" stroke-width="1"/>
<text x="608.0" y="428" text-anchor="middle" class="ax">9</text>
<line x1="633.5" x2="633.5" y1="405.5" y2="409.5" stroke="#a8bdd0" stroke-width="1"/>
<text x="633.0" y="428" text-anchor="middle" class="ax">12</text>
<line x1="657.5" x2="657.5" y1="405.5" y2="409.5" stroke="#a8bdd0" stroke-width="1"/>
<text x="657.0" y="428" text-anchor="middle" class="ax">13</text>
<line x1="681.5" x2="681.5" y1="405.5" y2="409.5" stroke="#a8bdd0" stroke-width="1"/>
<text x="681.0" y="428" text-anchor="middle" class="ax">14</text>
<line x1="706.5" x2="706.5" y1="405.5" y2="409.5" stroke="#a8bdd0" stroke-width="1"/>
<text x="706.0" y="428" text-anchor="middle" class="ax">15</text>
<line x1="730.5" x2="730.5" y1="405.5" y2="409.5" stroke="#a8bdd0" stroke-width="1"/>
<text x="730.0" y="428" text-anchor="middle" class="ax">16</text>
<line x1="754.5" x2="754.5" y1="405.5" y2="409.5" stroke="#a8bdd0" stroke-width="1"/>
<text x="754.0" y="428" text-anchor="middle" class="ax">19</text>
<line x1="779.5" x2="779.5" y1="405.5" y2="409.5" stroke="#a8bdd0" stroke-width="1"/>
<text x="779.0" y="428" text-anchor="middle" class="ax">20</text>
<line x1="803.5" x2="803.5" y1="405.5" y2="409.5" stroke="#a8bdd0" stroke-width="1"/>
<text x="803.0" y="428" text-anchor="middle" class="ax">21</text>
<line x1="827.5" x2="827.5" y1="405.5" y2="409.5" stroke="#a8bdd0" stroke-width="1"/>
<text x="827.0" y="428" text-anchor="middle" class="ax">22</text>
<line x1="851.5" x2="851.5" y1="405.5" y2="409.5" stroke="#a8bdd0" stroke-width="1"/>
<text x="851.0" y="428" text-anchor="middle" class="ax">23</text>
<line x1="876.5" x2="876.5" y1="405.5" y2="409.5" stroke="#a8bdd0" stroke-width="1"/>
<text x="876.0" y="428" text-anchor="middle" class="ax">26</text>
<text x="893.7" y="55.0" class="ax" textLength="32.6" lengthAdjust="spacingAndGlyphs">1.3200</text>
<text x="893.7" y="101.0" class="ax" textLength="32.6" lengthAdjust="spacingAndGlyphs">1.3100</text>
<text x="893.7" y="147.0" class="ax" textLength="32.6" lengthAdjust="spacingAndGlyphs">1.3000</text>
<text x="893.7" y="193.0" class="ax" textLength="32.6" lengthAdjust="spacingAndGlyphs">1.2900</text>
<text x="893.7" y="239.0" class="ax" textLength="32.6" lengthAdjust="spacingAndGlyphs">1.2800</text>
<text x="893.5" y="294" class="ax">-0.00</text>
<text x="893.5" y="371" class="ax">50</text>
<line x1="14.0" x2="14.0" y1="383" y2="409" stroke="#c2ddd8" stroke-width="2"/>
<line x1="463.0" x2="463.0" y1="383" y2="409" stroke="#c2ddd8" stroke-width="2"/>
<rect x="13" y="41" width="31" height="22" fill="#f1f1f1"/>
<rect x="13" y="41" width="31" height="5" fill="#d2d2d2"/>
<defs><linearGradient id="br" x1="0" y1="0" x2="0" y2="1"><stop offset="0" stop-color="#f05058"/><stop offset="1" stop-color="#c8141e"/></linearGradient><linearGradient id="bb" x1="0" y1="0" x2="0" y2="1"><stop offset="0" stop-color="#3aa8e0"/><stop offset="1" stop-color="#1278c0"/></linearGradient></defs>
<rect x="17.5" y="49.5" width="9" height="9" rx="1.8" fill="url(#br)" stroke="#a01018" stroke-width="1"/>
<rect x="30.5" y="49.5" width="9" height="9" rx="1.8" fill="url(#bb)" stroke="#1a68a8" stroke-width="1"/>
<rect x="446" y="84" width="6" height="6" fill="#d4d8d2"/>
<rect x="447.2" y="85.8" width="3.6" height="2.4" fill="#58d6c8"/>
<rect x="883" y="84" width="4.5" height="6.5" fill="#b0c8cc"/>
<rect x="884" y="85.5" width="3" height="3" fill="#6fd0d0"/>
<rect x="12.4" y="84" width="2" height="6" fill="#2c3a40"/>
<path d="M12.6 87L14.6 85.2V88.8Z" fill="#38c8a8"/>
<rect x="14.4" y="84" width="1.7" height="6" fill="#dcd8d4"/>
<rect x="720" y="91.5" width="166" height="11.5" fill="#3b434c"/>
<text x="721.3" y="101" class="lb" textLength="164" lengthAdjust="spacingAndGlyphs">Горизонтальная линия 1.31147</text>
<rect x="886" y="120" width="48" height="21" fill="#ffffff"/>
<text x="895.3" y="134.6" class="ax" style="fill:#4a505c" textLength="32.5" lengthAdjust="spacingAndGlyphs">1.3022</text>
<rect x="14" y="268.5" width="31" height="12" fill="#3b434c"/>
<text x="15.9" y="279" class="lg" fill="#15157a" textLength="27.8" lengthAdjust="spacingAndGlyphs">MACD</text>
<rect x="14" y="333" width="17" height="12.5" fill="#3b434c"/>
<text x="15.8" y="343.9" class="lg" fill="#f0862a" stroke="#f0862a" stroke-width="0.25" textLength="14.2" lengthAdjust="spacingAndGlyphs">RSI</text>
<rect x="14.5" y="383" width="59" height="18.5" rx="2.5" fill="#616e80" stroke="#a9bccb" stroke-width="1"/>
<text x="21.5" y="396.3" class="tg" textLength="46" lengthAdjust="spacingAndGlyphs">Сен 2020</text>
<rect x="464.0" y="383" width="59" height="18.5" rx="2.5" fill="#616e80" stroke="#a9bccb" stroke-width="1"/>
<text x="471.0" y="396.3" class="tg" textLength="46" lengthAdjust="spacingAndGlyphs">Окт 2020</text>
<path d="M6.2 11.6V25.4H20" stroke="#56667c" stroke-width="1.1" fill="none"/>
<path d="M4.8 13.4L6.2 11.2L7.6 13.4M18.6 23.9L20.6 25.4L18.6 26.9" stroke="#56667c" stroke-width="1" fill="none"/>
<path d="M10.4 15.6V23.6M14.5 11.2V20.6M18.5 14.2V22.6" stroke="#3c4a52" stroke-width="1"/>
<rect x="9.4" y="17" width="2" height="4.6" fill="#5f8a64" stroke="#3a5240" stroke-width="0.9"/>
<rect x="13.5" y="12.8" width="2" height="5.8" fill="#689468" stroke="#3a5240" stroke-width="0.9"/>
<rect x="17.5" y="15.8" width="2" height="4.6" fill="#93585a" stroke="#55303a" stroke-width="0.9"/>
<rect x="853.5" y="19.6" width="10" height="3.8" rx="1.2" fill="#f3f4f8" stroke="#4c4c58" stroke-width="1.1"/>
<rect x="886.5" y="15.7" width="10" height="7.6" rx="1" fill="#f3f4f8" stroke="#4c4c58" stroke-width="1.1"/>
<rect x="890" y="18.3" width="3.6" height="2.4" fill="#dfe2ea" stroke="#4c4c58" stroke-width="1"/>
<path d="M919.4 15.3H922.6L924.5 17.5L926.4 15.3H929.6L926.4 19.4L929.6 23.5H926.4L924.5 21.3L922.6 23.5H919.4L922.6 19.4Z" fill="#f3f4f8" stroke="#4c4c58" stroke-width="1.15" stroke-linejoin="round"/>
</svg>
</body></html>
